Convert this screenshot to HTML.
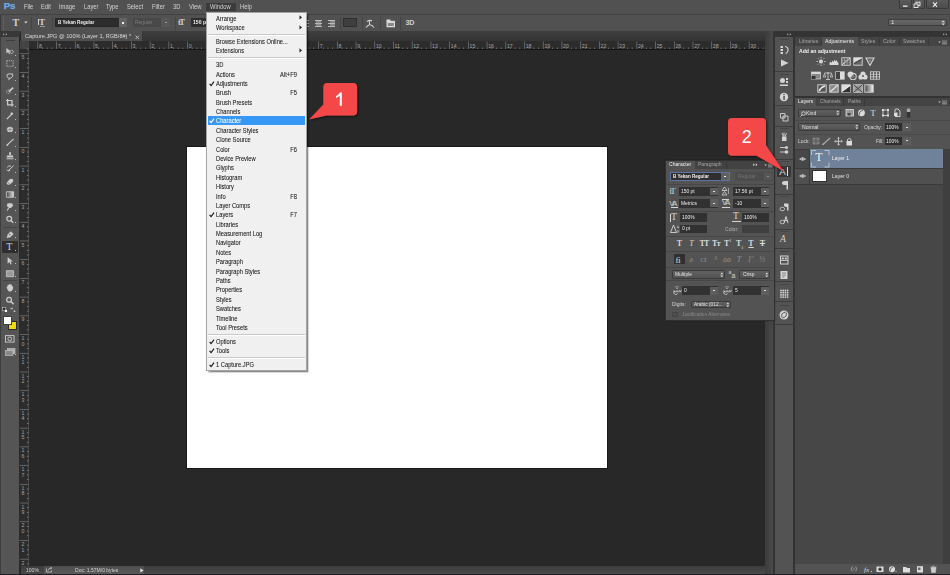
<!DOCTYPE html>
<html><head><meta charset="utf-8">
<style>
*{margin:0;padding:0;box-sizing:border-box}
html,body{width:950px;height:575px;overflow:hidden;background:#282828;font-family:"Liberation Sans",sans-serif;color:#ddd;position:relative}
.a{position:absolute}
.t{position:absolute;white-space:nowrap;line-height:1}
.ns *{vector-effect:non-scaling-stroke}
</style></head><body>
<div class="a" style="left:0px;top:0px;width:950px;height:14px;background:#515151;"></div>
<div class="a" style="left:0px;top:14px;width:950px;height:0.8px;background:#424242;"></div>
<div class="a" style="left:0px;top:14.8px;width:950px;height:0.6px;background:#595959;"></div>
<div class="t" style="left:3.8px;top:1.3px;font-size:9.8px;font-weight:bold;color:#6eaae6;letter-spacing:-0.3px;-webkit-text-stroke:0.25px #6eaae6">Ps</div>
<div class="a" style="left:206px;top:2.5px;width:30px;height:8.5px;background:#3b3b3b;"></div>
<div class="t" style="left:23.6px;top:3.97px;font-size:6.3px;color:#d4d4d4;font-weight:normal;transform:scaleX(0.92);transform-origin:0 0;">File</div>
<div class="t" style="left:40.9px;top:3.97px;font-size:6.3px;color:#d4d4d4;font-weight:normal;transform:scaleX(0.92);transform-origin:0 0;">Edit</div>
<div class="t" style="left:58.9px;top:3.97px;font-size:6.3px;color:#d4d4d4;font-weight:normal;transform:scaleX(0.92);transform-origin:0 0;">Image</div>
<div class="t" style="left:83.8px;top:3.97px;font-size:6.3px;color:#d4d4d4;font-weight:normal;transform:scaleX(0.92);transform-origin:0 0;">Layer</div>
<div class="t" style="left:106px;top:3.97px;font-size:6.3px;color:#d4d4d4;font-weight:normal;transform:scaleX(0.92);transform-origin:0 0;">Type</div>
<div class="t" style="left:127px;top:3.97px;font-size:6.3px;color:#d4d4d4;font-weight:normal;transform:scaleX(0.92);transform-origin:0 0;">Select</div>
<div class="t" style="left:151.6px;top:3.97px;font-size:6.3px;color:#d4d4d4;font-weight:normal;transform:scaleX(0.92);transform-origin:0 0;">Filter</div>
<div class="t" style="left:172.7px;top:3.97px;font-size:6.3px;color:#d4d4d4;font-weight:normal;transform:scaleX(0.92);transform-origin:0 0;">3D</div>
<div class="t" style="left:188.5px;top:3.97px;font-size:6.3px;color:#d4d4d4;font-weight:normal;transform:scaleX(0.92);transform-origin:0 0;">View</div>
<div class="t" style="left:209.7px;top:3.97px;font-size:6.3px;color:#d4d4d4;font-weight:normal;transform:scaleX(0.92);transform-origin:0 0;">Window</div>
<div class="t" style="left:240px;top:3.97px;font-size:6.3px;color:#d4d4d4;font-weight:normal;transform:scaleX(0.92);transform-origin:0 0;">Help</div>
<div class="a" style="left:898.5px;top:-1px;width:13.799999999999955px;height:10px;background:linear-gradient(#5c5c5c,#4c4c4c);border:1px solid #3a3a3a;border-top:none;border-radius:0 0 2px 2px"></div>
<div class="a" style="left:913px;top:-1px;width:12.299999999999955px;height:10px;background:linear-gradient(#5c5c5c,#4c4c4c);border:1px solid #3a3a3a;border-top:none;border-radius:0 0 2px 2px"></div>
<div class="a" style="left:926px;top:-1px;width:22.700000000000045px;height:10px;background:linear-gradient(#5c5c5c,#4c4c4c);border:1px solid #3a3a3a;border-top:none;border-radius:0 0 2px 2px"></div>
<svg class="a" style="left:898px;top:0px;" width="52" height="10" viewBox="0 0 52 10"><rect x="5" y="5.5" width="4.5" height="1.3" fill="#eee"/><rect x="18" y="2.2" width="4" height="3.5" fill="none" stroke="#eee" stroke-width="0.9"/><rect x="16" y="4" width="4" height="3.5" fill="#555" stroke="#eee" stroke-width="0.9"/><path d="M35 2.3 L39 6.8 M39 2.3 L35 6.8" stroke="#eee" stroke-width="1.1"/></svg>
<div class="a" style="left:0px;top:15px;width:950px;height:15.5px;background:#515151;"></div>
<div class="a" style="left:0px;top:30.5px;width:950px;height:0.5px;background:#3c3c3c;"></div>
<div class="a" style="left:0px;top:15px;width:1px;height:16px;background:#3a3a3a;"></div>
<div class="a" style="left:3px;top:17px;width:1px;height:1px;background:#6a6a6a;"></div>
<div class="a" style="left:3px;top:19px;width:1px;height:1px;background:#6a6a6a;"></div>
<div class="a" style="left:3px;top:21px;width:1px;height:1px;background:#6a6a6a;"></div>
<div class="a" style="left:3px;top:23px;width:1px;height:1px;background:#6a6a6a;"></div>
<div class="a" style="left:3px;top:25px;width:1px;height:1px;background:#6a6a6a;"></div>
<div class="a" style="left:3px;top:27px;width:1px;height:1px;background:#6a6a6a;"></div>
<div class="a" style="left:3px;top:29px;width:1px;height:1px;background:#6a6a6a;"></div>
<div class="t" style="left:12.6px;top:17.5px;font-family:'Liberation Serif',serif;font-weight:bold;font-size:10px;color:#cfcfcf">T</div>
<svg class="a" style="left:24px;top:21px;" width="4" height="3" viewBox="0 0 4 3"><path d="M0.2 0.5 L3.6 0.5 L1.9 2.5Z" fill="#ddd"/></svg>
<div class="a" style="left:30.5px;top:16.5px;width:1px;height:13px;background:#444;"></div>
<div class="t" style="left:39px;top:18.3px;font-family:'Liberation Serif',serif;font-weight:bold;font-size:9px;color:#cfcfcf">T</div>
<div class="a" style="left:38px;top:19px;width:0.8px;height:6px;background:#cfcfcf;"></div>
<div class="a" style="left:40px;top:26px;width:5px;height:1px;background:#9a9a9a;"></div>
<div class="a" style="left:51.5px;top:16.5px;width:1px;height:13px;background:#444;"></div>
<div class="a" style="left:55.2px;top:18.2px;width:72.2px;height:8.7px;background:#2d2d2d;border:0.5px solid #262626"></div>
<div class="t" style="left:57.90px;top:20.16px;font-size:5.6px;color:#eeeeee;font-weight:bold;transform:scaleX(0.8231);transform-origin:0 0;">B Yekan Regular</div>
<div class="a" style="left:118.7px;top:18.2px;width:8.7px;height:8.7px;background:#646464;"></div>
<div class="a" style="left:122.2px;top:22px;width:2px;height:1.5px;background:#eee;"></div>
<div class="a" style="left:133px;top:18.2px;width:37px;height:8.7px;background:#484848;"></div>
<div class="t" style="left:135.30px;top:19.99px;font-size:5.8px;color:#7d7d7d;font-weight:normal;transform:scaleX(0.8571);transform-origin:0 0;">Regular</div>
<div class="a" style="left:161.4px;top:18.2px;width:8.6px;height:8.7px;background:#575757;"></div>
<div class="a" style="left:165px;top:22.2px;width:1.6px;height:1px;background:#999;"></div>
<div class="a" style="left:174.5px;top:16.5px;width:1px;height:13px;background:#444;"></div>
<div class="t" style="left:178px;top:18px;font-family:'Liberation Serif',serif;font-weight:bold;font-size:8.5px;color:#cfcfcf;letter-spacing:-1.5px">tT</div>
<div class="a" style="left:191.4px;top:18.2px;width:20px;height:8.7px;background:#2d2d2d;"></div>
<div class="t" style="left:193px;top:20.33px;font-size:5.4px;color:#eee;font-weight:bold;transform:scaleX(0.95);transform-origin:0 0;">150 pt</div>
<svg class="a" style="left:302px;top:19.5px;" width="8" height="8" viewBox="0 0 8 8"><rect x="0" y="0.0" width="7" height="0.9" fill="#c8c8c8"/><rect x="0" y="1.5" width="5" height="0.9" fill="#c8c8c8"/><rect x="0" y="3.0" width="7" height="0.9" fill="#c8c8c8"/><rect x="0" y="4.5" width="5" height="0.9" fill="#c8c8c8"/><rect x="0" y="6.0" width="7" height="0.9" fill="#c8c8c8"/></svg>
<svg class="a" style="left:314.5px;top:19.5px;" width="8" height="8" viewBox="0 0 8 8"><rect x="0.0" y="0.0" width="7" height="0.9" fill="#c8c8c8"/><rect x="1.0" y="1.5" width="5" height="0.9" fill="#c8c8c8"/><rect x="0.0" y="3.0" width="7" height="0.9" fill="#c8c8c8"/><rect x="1.0" y="4.5" width="5" height="0.9" fill="#c8c8c8"/><rect x="0.0" y="6.0" width="7" height="0.9" fill="#c8c8c8"/></svg>
<svg class="a" style="left:327.5px;top:19.5px;" width="8" height="8" viewBox="0 0 8 8"><rect x="0" y="0.0" width="7" height="0.9" fill="#c8c8c8"/><rect x="2" y="1.5" width="5" height="0.9" fill="#c8c8c8"/><rect x="0" y="3.0" width="7" height="0.9" fill="#c8c8c8"/><rect x="2" y="4.5" width="5" height="0.9" fill="#c8c8c8"/><rect x="0" y="6.0" width="7" height="0.9" fill="#c8c8c8"/></svg>
<div class="a" style="left:340.2px;top:16.5px;width:1px;height:13px;background:#444;"></div>
<div class="a" style="left:343px;top:18px;width:13.8px;height:8.9px;background:#3f3f3f;border:0.6px solid #2e2e2e"></div>
<div class="a" style="left:361.8px;top:16.5px;width:1px;height:13px;background:#444;"></div>
<svg class="a" style="left:365px;top:18.5px;" width="10" height="9" viewBox="0 0 10 9"><path d="M2 2.5 Q5 0.5 7 2 M4.5 2 L4.5 5.5 M1 8.5 Q5 3 9 8.5" stroke="#d0d0d0" stroke-width="1.1" fill="none"/></svg>
<div class="a" style="left:380px;top:16.5px;width:1px;height:13px;background:#444;"></div>
<svg class="a" style="left:385.5px;top:18.8px;" width="10" height="9" viewBox="0 0 10 9"><rect x="0.5" y="1.8" width="8.5" height="6.5" fill="#d8d8d8"/><rect x="0.5" y="0.5" width="4" height="2" fill="#d8d8d8"/><rect x="1.8" y="4" width="6" height="3" fill="#888"/></svg>
<div class="a" style="left:400.2px;top:16.5px;width:1px;height:13px;background:#444;"></div>
<div class="t" style="left:405.5px;top:19.2px;font-size:7.2px;font-weight:bold;color:#d0d0d0;letter-spacing:-0.3px">3D</div>
<div class="a" style="left:887.7px;top:18.8px;width:59px;height:7.6px;background:linear-gradient(#686868,#5a5a5a);border:0.6px solid #3e3e3e;border-radius:1px"></div>
<div class="t" style="left:891px;top:20.14px;font-size:5.5px;color:#e0e0e0;font-weight:normal;">1</div>
<svg class="a" style="left:941px;top:19.8px;" width="5" height="6" viewBox="0 0 5 6"><path d="M0.5 2.3 L2.2 0.5 L3.9 2.3Z M0.5 3.5 L2.2 5.3 L3.9 3.5Z" fill="#ddd"/></svg>
<div class="a" style="left:0px;top:31px;width:19px;height:544px;background:#555555;"></div>
<div class="a" style="left:0px;top:31px;width:1.2px;height:544px;background:#3e3e3e;"></div>
<div class="a" style="left:19px;top:41px;width:1px;height:525px;background:#2a2a2a;"></div>
<div class="a" style="left:0px;top:31px;width:19.5px;height:5.8px;background:#383838;"></div>
<svg class="a" style="left:3px;top:32.5px;" width="6" height="3" viewBox="0 0 6 3"><path d="M0.3 0.2 L1.6 1.3 L0.3 2.4Z M2.8 0.2 L4.1 1.3 L2.8 2.4Z" fill="#bbb"/></svg>
<div class="a" style="left:5.5px;top:39.6px;width:9px;height:1px;background:#3d3d3d;"></div>
<svg class="a" style="left:4px;top:46.0px;" width="12" height="11" viewBox="0 0 12 11"><g class="ns" transform="translate(6 5.5) scale(.8) translate(-6 -5.5)"><path d="M1.5 1 L1.5 8 L3.5 6 L5 9 L6 8.5 L4.8 5.6 L7.2 5.6Z" fill="#cdcdcd"/><path d="M8 3.5 L10.5 6 L8 8.5 L5.5 6Z" fill="none" stroke="#cdcdcd" stroke-width="0.8"/></g></svg>
<div class="a" style="left:14.6px;top:54.5px;width:1px;height:1px;background:#bbb;"></div>
<svg class="a" style="left:4px;top:58.3px;" width="12" height="11" viewBox="0 0 12 11"><g class="ns" transform="translate(6 5.5) scale(.8) translate(-6 -5.5)"><rect x="2" y="2" width="8" height="7" fill="none" stroke="#cdcdcd" stroke-width="0.9" stroke-dasharray="1 1.1"/></g></svg>
<div class="a" style="left:14.6px;top:66.8px;width:1px;height:1px;background:#bbb;"></div>
<svg class="a" style="left:4px;top:71.3px;" width="12" height="11" viewBox="0 0 12 11"><g class="ns" transform="translate(6 5.5) scale(.8) translate(-6 -5.5)"><path d="M2 3 Q5 1.5 9.5 2.5 Q10 6 7 7.5 Q4 8.5 2.5 6 Q1.5 4 3 3.5 M5 8 L4.5 10" fill="none" stroke="#cdcdcd" stroke-width="1"/></g></svg>
<div class="a" style="left:14.6px;top:79.8px;width:1px;height:1px;background:#bbb;"></div>
<svg class="a" style="left:4px;top:85.0px;" width="12" height="11" viewBox="0 0 12 11"><g class="ns" transform="translate(6 5.5) scale(.8) translate(-6 -5.5)"><circle cx="4" cy="7" r="2.3" fill="none" stroke="#cdcdcd" stroke-width="0.8" stroke-dasharray="1 0.8"/><path d="M4.5 7 L10 2" stroke="#cdcdcd" stroke-width="1.6"/></g></svg>
<div class="a" style="left:14.6px;top:93.5px;width:1px;height:1px;background:#bbb;"></div>
<svg class="a" style="left:4px;top:97.1px;" width="12" height="11" viewBox="0 0 12 11"><g class="ns" transform="translate(6 5.5) scale(.8) translate(-6 -5.5)"><path d="M3 1 L3 8.5 L10.5 8.5 M1 3 L8.5 3 L8.5 10.5" fill="none" stroke="#cdcdcd" stroke-width="1.2"/></g></svg>
<div class="a" style="left:14.6px;top:105.6px;width:1px;height:1px;background:#bbb;"></div>
<svg class="a" style="left:4px;top:110.0px;" width="12" height="11" viewBox="0 0 12 11"><g class="ns" transform="translate(6 5.5) scale(.8) translate(-6 -5.5)"><path d="M2 10 L7 5" stroke="#cdcdcd" stroke-width="1.2"/><path d="M6 3.5 L8 1.5 Q10 1.5 10 3.5 L8 5.5Z" fill="#cdcdcd"/></g></svg>
<div class="a" style="left:14.6px;top:118.5px;width:1px;height:1px;background:#bbb;"></div>
<svg class="a" style="left:4px;top:123.69999999999999px;" width="12" height="11" viewBox="0 0 12 11"><g class="ns" transform="translate(6 5.5) scale(.8) translate(-6 -5.5)"><ellipse cx="6" cy="5.5" rx="3.8" ry="3.3" fill="#cdcdcd"/><path d="M1 5.5 L11 5.5 M6 1 L6 10" stroke="#777" stroke-width="0.6"/></g></svg>
<div class="a" style="left:14.6px;top:132.2px;width:1px;height:1px;background:#bbb;"></div>
<svg class="a" style="left:4px;top:137.3px;" width="12" height="11" viewBox="0 0 12 11"><g class="ns" transform="translate(6 5.5) scale(.8) translate(-6 -5.5)"><path d="M3.5 7.5 L10.5 1" stroke="#cdcdcd" stroke-width="1.1"/><path d="M1.5 10 Q1.5 7 3.8 7.2 Q5 8.5 3 9.8Z" fill="#cdcdcd"/></g></svg>
<div class="a" style="left:14.6px;top:145.8px;width:1px;height:1px;background:#bbb;"></div>
<svg class="a" style="left:4px;top:150.3px;" width="12" height="11" viewBox="0 0 12 11"><g class="ns" transform="translate(6 5.5) scale(.8) translate(-6 -5.5)"><rect x="5" y="1" width="2.2" height="4.5" rx="1" fill="#cdcdcd"/><rect x="2" y="5.5" width="8" height="2.5" fill="#cdcdcd"/><rect x="1.5" y="9" width="9" height="1.2" fill="#cdcdcd"/></g></svg>
<div class="a" style="left:14.6px;top:158.8px;width:1px;height:1px;background:#bbb;"></div>
<svg class="a" style="left:4px;top:163.3px;" width="12" height="11" viewBox="0 0 12 11"><g class="ns" transform="translate(6 5.5) scale(.8) translate(-6 -5.5)"><path d="M2.5 4 Q4 1.5 7 2.5 M2 7 Q3 9.5 6 8 M4 8 L10.5 2" fill="none" stroke="#cdcdcd" stroke-width="1"/></g></svg>
<div class="a" style="left:14.6px;top:171.8px;width:1px;height:1px;background:#bbb;"></div>
<svg class="a" style="left:4px;top:176.1px;" width="12" height="11" viewBox="0 0 12 11"><g class="ns" transform="translate(6 5.5) scale(.8) translate(-6 -5.5)"><path d="M1.5 7 L6 2.5 Q7.5 1.5 9 2.5 L10 3.5 Q10.5 5 9.5 6 L5.5 9.5 L3 9.5Z" fill="#cdcdcd"/><path d="M2.5 6 L6 9.3" stroke="#666" stroke-width="0.7"/></g></svg>
<div class="a" style="left:14.6px;top:184.6px;width:1px;height:1px;background:#bbb;"></div>
<svg class="a" style="left:4px;top:188.5px;" width="12" height="11" viewBox="0 0 12 11"><g class="ns" transform="translate(6 5.5) scale(.8) translate(-6 -5.5)"><rect x="1.5" y="2" width="9" height="7" fill="url(#gr)" stroke="#cdcdcd" stroke-width="0.8"/><defs><linearGradient id="gr"><stop offset="0" stop-color="#444"/><stop offset="1" stop-color="#ddd"/></linearGradient></defs></g></svg>
<div class="a" style="left:14.6px;top:197px;width:1px;height:1px;background:#bbb;"></div>
<svg class="a" style="left:4px;top:201.1px;" width="12" height="11" viewBox="0 0 12 11"><g class="ns" transform="translate(6 5.5) scale(.8) translate(-6 -5.5)"><path d="M3 1.5 L8.5 1.5 L10 4.5 L7 7.5 L5 7.5 L2 5Z" fill="#cdcdcd"/><path d="M4.5 7 L2.5 10.5" stroke="#cdcdcd" stroke-width="1.1"/></g></svg>
<div class="a" style="left:14.6px;top:209.6px;width:1px;height:1px;background:#bbb;"></div>
<svg class="a" style="left:4px;top:213.5px;" width="12" height="11" viewBox="0 0 12 11"><g class="ns" transform="translate(6 5.5) scale(.8) translate(-6 -5.5)"><circle cx="5" cy="4.5" r="3" fill="none" stroke="#cdcdcd" stroke-width="1.2"/><path d="M7 6.5 L10 9.5" stroke="#cdcdcd" stroke-width="1.3"/></g></svg>
<div class="a" style="left:14.6px;top:222px;width:1px;height:1px;background:#bbb;"></div>
<div class="a" style="left:3px;top:227.3px;width:14px;height:0.8px;background:#444;"></div>
<svg class="a" style="left:4px;top:228.6px;" width="12" height="11" viewBox="0 0 12 11"><g class="ns" transform="translate(6 5.5) scale(.8) translate(-6 -5.5)"><path d="M2 10 L3 5.5 L7 1.5 L10.5 5 L6.5 9Z" fill="#cdcdcd"/><circle cx="5.8" cy="5.8" r="0.9" fill="#555"/></g></svg>
<div class="a" style="left:14.6px;top:237.1px;width:1px;height:1px;background:#bbb;"></div>
<div class="a" style="left:2.3px;top:241.3px;width:15.3px;height:11.7px;background:#2e2e2e;border-radius:1px"></div>
<div class="t" style="left:6.2px;top:242.4px;font-family:'Liberation Serif',serif;font-size:10px;color:#d0d0d0">T</div>
<div class="a" style="left:14.6px;top:250px;width:1px;height:1px;background:#bbb;"></div>
<svg class="a" style="left:4px;top:254.7px;" width="12" height="11" viewBox="0 0 12 11"><g class="ns" transform="translate(6 5.5) scale(.8) translate(-6 -5.5)"><path d="M3 1 L3 9.5 L5.2 7.4 L6.6 10.5 L8 9.9 L6.7 6.9 L9.5 6.9Z" fill="#cdcdcd"/></g></svg>
<div class="a" style="left:14.6px;top:263.2px;width:1px;height:1px;background:#bbb;"></div>
<svg class="a" style="left:4px;top:267.7px;" width="12" height="11" viewBox="0 0 12 11"><g class="ns" transform="translate(6 5.5) scale(.8) translate(-6 -5.5)"><rect x="1.5" y="2" width="9" height="7.5" fill="#9a9a9a" stroke="#cdcdcd" stroke-width="0.8"/></g></svg>
<div class="a" style="left:14.6px;top:276.2px;width:1px;height:1px;background:#bbb;"></div>
<div class="a" style="left:3px;top:279.6px;width:14px;height:0.8px;background:#444;"></div>
<svg class="a" style="left:4px;top:282.1px;" width="12" height="11" viewBox="0 0 12 11"><g class="ns" transform="translate(6 5.5) scale(.8) translate(-6 -5.5)"><path d="M2 6 Q1.5 4 3 4.5 L3 2.5 Q4 1.5 4.8 2.5 L4.8 1.5 Q5.8 0.5 6.6 1.5 L6.6 2 Q7.6 1.2 8.4 2.2 L8.4 4 Q9.5 3.5 10 4.5 L9.5 8 Q8.5 10.5 6 10.5 Q3.5 10.5 2 6Z" fill="#cdcdcd"/></g></svg>
<div class="a" style="left:14.6px;top:290.6px;width:1px;height:1px;background:#bbb;"></div>
<svg class="a" style="left:4px;top:294.9px;" width="12" height="11" viewBox="0 0 12 11"><g class="ns" transform="translate(6 5.5) scale(.8) translate(-6 -5.5)"><circle cx="4.8" cy="4.5" r="3" fill="none" stroke="#cdcdcd" stroke-width="1.2"/><path d="M7 6.8 L10.5 10" stroke="#cdcdcd" stroke-width="1.5"/></g></svg>
<svg class="a" style="left:2px;top:307px;" width="6" height="6" viewBox="0 0 6 6"><rect x="0.5" y="0.5" width="3" height="3" fill="#222" stroke="#ccc" stroke-width="0.6"/><rect x="2.3" y="2.3" width="3" height="3" fill="#fff" stroke="#222" stroke-width="0.5"/></svg>
<svg class="a" style="left:10px;top:307px;" width="7" height="6" viewBox="0 0 7 6"><path d="M1 1.5 L3 1.5 M4.5 3 L4.5 5 M1 1.5 L2 0.5 M1 1.5 L2 2.5 M4.5 5 L3.5 4 M4.5 5 L5.5 4" stroke="#ccc" stroke-width="0.7" fill="none"/></svg>
<div class="a" style="left:7.8px;top:321px;width:9.2px;height:9.2px;background:#f2d900;border:0.6px solid #2b2b2b"></div>
<div class="a" style="left:2.6px;top:316px;width:9.8px;height:9.2px;background:#ffffff;border:0.6px solid #444"></div>
<svg class="a" style="left:5px;top:334.5px;" width="10" height="8" viewBox="0 0 10 8"><rect x="0.5" y="0.6" width="8.5" height="6.5" fill="none" stroke="#ccc" stroke-width="0.9"/><circle cx="4.75" cy="3.85" r="1.9" fill="none" stroke="#ccc" stroke-width="0.9"/></svg>
<svg class="a" style="left:5px;top:347.5px;" width="11" height="8" viewBox="0 0 11 8"><rect x="2.5" y="0.5" width="7.5" height="5" fill="#aaa" stroke="#ccc" stroke-width="0.6"/><rect x="0.5" y="2.5" width="7.5" height="5" fill="#888" stroke="#ccc" stroke-width="0.6"/></svg>
<div class="a" style="left:14.6px;top:354px;width:1px;height:1px;background:#bbb;"></div>
<div class="a" style="left:20.5px;top:31px;width:744.5px;height:10px;background:linear-gradient(#3e3e3e,#343434);"></div>
<div class="a" style="left:21.2px;top:31.4px;width:120.4px;height:9.6px;background:#505050;"></div>
<div class="t" style="left:25.3px;top:33.45px;font-size:6.2px;color:#dadada;font-weight:normal;transform:scaleX(0.905);transform-origin:0 0;">Capture.JPG @ 100% (Layer 1, RGB/8#) *</div>
<svg class="a" style="left:134.8px;top:34.5px;" width="5" height="5" viewBox="0 0 5 5"><path d="M0.6 0.6 L4 4 M4 0.6 L0.6 4" stroke="#cfcfcf" stroke-width="0.8"/></svg>
<div class="a" style="left:20.5px;top:41px;width:744.5px;height:8px;background:#2c2c2c;"></div>
<div class="a" style="left:19.5px;top:41px;width:9.2px;height:525.2px;background:#2c2c2c;"></div>
<div class="a" style="left:19.5px;top:41px;width:9.2px;height:8px;background:#444444;"></div>
<div class="a" style="left:28.7px;top:49px;width:736.3px;height:1px;background:#161616;"></div>
<div class="a" style="left:28.3px;top:49px;width:0.7px;height:517px;background:#4a4a4a;"></div>
<svg class="a" style="left:0;top:0" width="950" height="575" viewBox="0 0 950 575"><rect x="37.44" y="41.5" width="0.7" height="7.5" fill="#7a7a7a"/><text x="38.94" y="48" font-size="5.2" fill="#a5a5a5" font-family="Liberation Sans">8</text><rect x="42.12" y="47.6" width="0.7" height="1.2" fill="#9a9a9a"/><rect x="46.80" y="47.6" width="0.7" height="1.2" fill="#9a9a9a"/><rect x="51.48" y="47.6" width="0.7" height="1.2" fill="#9a9a9a"/><rect x="56.16" y="41.5" width="0.7" height="7.5" fill="#7a7a7a"/><text x="57.66" y="48" font-size="5.2" fill="#a5a5a5" font-family="Liberation Sans">7</text><rect x="60.84" y="47.6" width="0.7" height="1.2" fill="#9a9a9a"/><rect x="65.52" y="47.6" width="0.7" height="1.2" fill="#9a9a9a"/><rect x="70.20" y="47.6" width="0.7" height="1.2" fill="#9a9a9a"/><rect x="74.88" y="41.5" width="0.7" height="7.5" fill="#7a7a7a"/><text x="76.38" y="48" font-size="5.2" fill="#a5a5a5" font-family="Liberation Sans">6</text><rect x="79.56" y="47.6" width="0.7" height="1.2" fill="#9a9a9a"/><rect x="84.24" y="47.6" width="0.7" height="1.2" fill="#9a9a9a"/><rect x="88.92" y="47.6" width="0.7" height="1.2" fill="#9a9a9a"/><rect x="93.60" y="41.5" width="0.7" height="7.5" fill="#7a7a7a"/><text x="95.10" y="48" font-size="5.2" fill="#a5a5a5" font-family="Liberation Sans">5</text><rect x="98.28" y="47.6" width="0.7" height="1.2" fill="#9a9a9a"/><rect x="102.96" y="47.6" width="0.7" height="1.2" fill="#9a9a9a"/><rect x="107.64" y="47.6" width="0.7" height="1.2" fill="#9a9a9a"/><rect x="112.32" y="41.5" width="0.7" height="7.5" fill="#7a7a7a"/><text x="113.82" y="48" font-size="5.2" fill="#a5a5a5" font-family="Liberation Sans">4</text><rect x="117.00" y="47.6" width="0.7" height="1.2" fill="#9a9a9a"/><rect x="121.68" y="47.6" width="0.7" height="1.2" fill="#9a9a9a"/><rect x="126.36" y="47.6" width="0.7" height="1.2" fill="#9a9a9a"/><rect x="131.04" y="41.5" width="0.7" height="7.5" fill="#7a7a7a"/><text x="132.54" y="48" font-size="5.2" fill="#a5a5a5" font-family="Liberation Sans">3</text><rect x="135.72" y="47.6" width="0.7" height="1.2" fill="#9a9a9a"/><rect x="140.40" y="47.6" width="0.7" height="1.2" fill="#9a9a9a"/><rect x="145.08" y="47.6" width="0.7" height="1.2" fill="#9a9a9a"/><rect x="149.76" y="41.5" width="0.7" height="7.5" fill="#7a7a7a"/><text x="151.26" y="48" font-size="5.2" fill="#a5a5a5" font-family="Liberation Sans">2</text><rect x="154.44" y="47.6" width="0.7" height="1.2" fill="#9a9a9a"/><rect x="159.12" y="47.6" width="0.7" height="1.2" fill="#9a9a9a"/><rect x="163.80" y="47.6" width="0.7" height="1.2" fill="#9a9a9a"/><rect x="168.48" y="41.5" width="0.7" height="7.5" fill="#7a7a7a"/><text x="169.98" y="48" font-size="5.2" fill="#a5a5a5" font-family="Liberation Sans">1</text><rect x="173.16" y="47.6" width="0.7" height="1.2" fill="#9a9a9a"/><rect x="177.84" y="47.6" width="0.7" height="1.2" fill="#9a9a9a"/><rect x="182.52" y="47.6" width="0.7" height="1.2" fill="#9a9a9a"/><rect x="187.20" y="41.5" width="0.7" height="7.5" fill="#7a7a7a"/><text x="188.70" y="48" font-size="5.2" fill="#a5a5a5" font-family="Liberation Sans">0</text><rect x="191.88" y="47.6" width="0.7" height="1.2" fill="#9a9a9a"/><rect x="196.56" y="47.6" width="0.7" height="1.2" fill="#9a9a9a"/><rect x="201.24" y="47.6" width="0.7" height="1.2" fill="#9a9a9a"/><rect x="205.92" y="41.5" width="0.7" height="7.5" fill="#7a7a7a"/><text x="207.42" y="48" font-size="5.2" fill="#a5a5a5" font-family="Liberation Sans">1</text><rect x="210.60" y="47.6" width="0.7" height="1.2" fill="#9a9a9a"/><rect x="215.28" y="47.6" width="0.7" height="1.2" fill="#9a9a9a"/><rect x="219.96" y="47.6" width="0.7" height="1.2" fill="#9a9a9a"/><rect x="224.64" y="41.5" width="0.7" height="7.5" fill="#7a7a7a"/><text x="226.14" y="48" font-size="5.2" fill="#a5a5a5" font-family="Liberation Sans">2</text><rect x="229.32" y="47.6" width="0.7" height="1.2" fill="#9a9a9a"/><rect x="234.00" y="47.6" width="0.7" height="1.2" fill="#9a9a9a"/><rect x="238.68" y="47.6" width="0.7" height="1.2" fill="#9a9a9a"/><rect x="243.36" y="41.5" width="0.7" height="7.5" fill="#7a7a7a"/><text x="244.86" y="48" font-size="5.2" fill="#a5a5a5" font-family="Liberation Sans">3</text><rect x="248.04" y="47.6" width="0.7" height="1.2" fill="#9a9a9a"/><rect x="252.72" y="47.6" width="0.7" height="1.2" fill="#9a9a9a"/><rect x="257.40" y="47.6" width="0.7" height="1.2" fill="#9a9a9a"/><rect x="262.08" y="41.5" width="0.7" height="7.5" fill="#7a7a7a"/><text x="263.58" y="48" font-size="5.2" fill="#a5a5a5" font-family="Liberation Sans">4</text><rect x="266.76" y="47.6" width="0.7" height="1.2" fill="#9a9a9a"/><rect x="271.44" y="47.6" width="0.7" height="1.2" fill="#9a9a9a"/><rect x="276.12" y="47.6" width="0.7" height="1.2" fill="#9a9a9a"/><rect x="280.80" y="41.5" width="0.7" height="7.5" fill="#7a7a7a"/><text x="282.30" y="48" font-size="5.2" fill="#a5a5a5" font-family="Liberation Sans">5</text><rect x="285.48" y="47.6" width="0.7" height="1.2" fill="#9a9a9a"/><rect x="290.16" y="47.6" width="0.7" height="1.2" fill="#9a9a9a"/><rect x="294.84" y="47.6" width="0.7" height="1.2" fill="#9a9a9a"/><rect x="299.52" y="41.5" width="0.7" height="7.5" fill="#7a7a7a"/><text x="301.02" y="48" font-size="5.2" fill="#a5a5a5" font-family="Liberation Sans">6</text><rect x="304.20" y="47.6" width="0.7" height="1.2" fill="#9a9a9a"/><rect x="308.88" y="47.6" width="0.7" height="1.2" fill="#9a9a9a"/><rect x="313.56" y="47.6" width="0.7" height="1.2" fill="#9a9a9a"/><rect x="318.24" y="41.5" width="0.7" height="7.5" fill="#7a7a7a"/><text x="319.74" y="48" font-size="5.2" fill="#a5a5a5" font-family="Liberation Sans">7</text><rect x="322.92" y="47.6" width="0.7" height="1.2" fill="#9a9a9a"/><rect x="327.60" y="47.6" width="0.7" height="1.2" fill="#9a9a9a"/><rect x="332.28" y="47.6" width="0.7" height="1.2" fill="#9a9a9a"/><rect x="336.96" y="41.5" width="0.7" height="7.5" fill="#7a7a7a"/><text x="338.46" y="48" font-size="5.2" fill="#a5a5a5" font-family="Liberation Sans">8</text><rect x="341.64" y="47.6" width="0.7" height="1.2" fill="#9a9a9a"/><rect x="346.32" y="47.6" width="0.7" height="1.2" fill="#9a9a9a"/><rect x="351.00" y="47.6" width="0.7" height="1.2" fill="#9a9a9a"/><rect x="355.68" y="41.5" width="0.7" height="7.5" fill="#7a7a7a"/><text x="357.18" y="48" font-size="5.2" fill="#a5a5a5" font-family="Liberation Sans">9</text><rect x="360.36" y="47.6" width="0.7" height="1.2" fill="#9a9a9a"/><rect x="365.04" y="47.6" width="0.7" height="1.2" fill="#9a9a9a"/><rect x="369.72" y="47.6" width="0.7" height="1.2" fill="#9a9a9a"/><rect x="374.40" y="41.5" width="0.7" height="7.5" fill="#7a7a7a"/><text x="375.90" y="48" font-size="5.2" fill="#a5a5a5" font-family="Liberation Sans">10</text><rect x="379.08" y="47.6" width="0.7" height="1.2" fill="#9a9a9a"/><rect x="383.76" y="47.6" width="0.7" height="1.2" fill="#9a9a9a"/><rect x="388.44" y="47.6" width="0.7" height="1.2" fill="#9a9a9a"/><rect x="393.12" y="41.5" width="0.7" height="7.5" fill="#7a7a7a"/><text x="394.62" y="48" font-size="5.2" fill="#a5a5a5" font-family="Liberation Sans">11</text><rect x="397.80" y="47.6" width="0.7" height="1.2" fill="#9a9a9a"/><rect x="402.48" y="47.6" width="0.7" height="1.2" fill="#9a9a9a"/><rect x="407.16" y="47.6" width="0.7" height="1.2" fill="#9a9a9a"/><rect x="411.84" y="41.5" width="0.7" height="7.5" fill="#7a7a7a"/><text x="413.34" y="48" font-size="5.2" fill="#a5a5a5" font-family="Liberation Sans">12</text><rect x="416.52" y="47.6" width="0.7" height="1.2" fill="#9a9a9a"/><rect x="421.20" y="47.6" width="0.7" height="1.2" fill="#9a9a9a"/><rect x="425.88" y="47.6" width="0.7" height="1.2" fill="#9a9a9a"/><rect x="430.56" y="41.5" width="0.7" height="7.5" fill="#7a7a7a"/><text x="432.06" y="48" font-size="5.2" fill="#a5a5a5" font-family="Liberation Sans">13</text><rect x="435.24" y="47.6" width="0.7" height="1.2" fill="#9a9a9a"/><rect x="439.92" y="47.6" width="0.7" height="1.2" fill="#9a9a9a"/><rect x="444.60" y="47.6" width="0.7" height="1.2" fill="#9a9a9a"/><rect x="449.28" y="41.5" width="0.7" height="7.5" fill="#7a7a7a"/><text x="450.78" y="48" font-size="5.2" fill="#a5a5a5" font-family="Liberation Sans">14</text><rect x="453.96" y="47.6" width="0.7" height="1.2" fill="#9a9a9a"/><rect x="458.64" y="47.6" width="0.7" height="1.2" fill="#9a9a9a"/><rect x="463.32" y="47.6" width="0.7" height="1.2" fill="#9a9a9a"/><rect x="468.00" y="41.5" width="0.7" height="7.5" fill="#7a7a7a"/><text x="469.50" y="48" font-size="5.2" fill="#a5a5a5" font-family="Liberation Sans">15</text><rect x="472.68" y="47.6" width="0.7" height="1.2" fill="#9a9a9a"/><rect x="477.36" y="47.6" width="0.7" height="1.2" fill="#9a9a9a"/><rect x="482.04" y="47.6" width="0.7" height="1.2" fill="#9a9a9a"/><rect x="486.72" y="41.5" width="0.7" height="7.5" fill="#7a7a7a"/><text x="488.22" y="48" font-size="5.2" fill="#a5a5a5" font-family="Liberation Sans">16</text><rect x="491.40" y="47.6" width="0.7" height="1.2" fill="#9a9a9a"/><rect x="496.08" y="47.6" width="0.7" height="1.2" fill="#9a9a9a"/><rect x="500.76" y="47.6" width="0.7" height="1.2" fill="#9a9a9a"/><rect x="505.44" y="41.5" width="0.7" height="7.5" fill="#7a7a7a"/><text x="506.94" y="48" font-size="5.2" fill="#a5a5a5" font-family="Liberation Sans">17</text><rect x="510.12" y="47.6" width="0.7" height="1.2" fill="#9a9a9a"/><rect x="514.80" y="47.6" width="0.7" height="1.2" fill="#9a9a9a"/><rect x="519.48" y="47.6" width="0.7" height="1.2" fill="#9a9a9a"/><rect x="524.16" y="41.5" width="0.7" height="7.5" fill="#7a7a7a"/><text x="525.66" y="48" font-size="5.2" fill="#a5a5a5" font-family="Liberation Sans">18</text><rect x="528.84" y="47.6" width="0.7" height="1.2" fill="#9a9a9a"/><rect x="533.52" y="47.6" width="0.7" height="1.2" fill="#9a9a9a"/><rect x="538.20" y="47.6" width="0.7" height="1.2" fill="#9a9a9a"/><rect x="542.88" y="41.5" width="0.7" height="7.5" fill="#7a7a7a"/><text x="544.38" y="48" font-size="5.2" fill="#a5a5a5" font-family="Liberation Sans">19</text><rect x="547.56" y="47.6" width="0.7" height="1.2" fill="#9a9a9a"/><rect x="552.24" y="47.6" width="0.7" height="1.2" fill="#9a9a9a"/><rect x="556.92" y="47.6" width="0.7" height="1.2" fill="#9a9a9a"/><rect x="561.60" y="41.5" width="0.7" height="7.5" fill="#7a7a7a"/><text x="563.10" y="48" font-size="5.2" fill="#a5a5a5" font-family="Liberation Sans">20</text><rect x="566.28" y="47.6" width="0.7" height="1.2" fill="#9a9a9a"/><rect x="570.96" y="47.6" width="0.7" height="1.2" fill="#9a9a9a"/><rect x="575.64" y="47.6" width="0.7" height="1.2" fill="#9a9a9a"/><rect x="580.32" y="41.5" width="0.7" height="7.5" fill="#7a7a7a"/><text x="581.82" y="48" font-size="5.2" fill="#a5a5a5" font-family="Liberation Sans">21</text><rect x="585.00" y="47.6" width="0.7" height="1.2" fill="#9a9a9a"/><rect x="589.68" y="47.6" width="0.7" height="1.2" fill="#9a9a9a"/><rect x="594.36" y="47.6" width="0.7" height="1.2" fill="#9a9a9a"/><rect x="599.04" y="41.5" width="0.7" height="7.5" fill="#7a7a7a"/><text x="600.54" y="48" font-size="5.2" fill="#a5a5a5" font-family="Liberation Sans">22</text><rect x="603.72" y="47.6" width="0.7" height="1.2" fill="#9a9a9a"/><rect x="608.40" y="47.6" width="0.7" height="1.2" fill="#9a9a9a"/><rect x="613.08" y="47.6" width="0.7" height="1.2" fill="#9a9a9a"/><rect x="617.76" y="41.5" width="0.7" height="7.5" fill="#7a7a7a"/><text x="619.26" y="48" font-size="5.2" fill="#a5a5a5" font-family="Liberation Sans">23</text><rect x="622.44" y="47.6" width="0.7" height="1.2" fill="#9a9a9a"/><rect x="627.12" y="47.6" width="0.7" height="1.2" fill="#9a9a9a"/><rect x="631.80" y="47.6" width="0.7" height="1.2" fill="#9a9a9a"/><rect x="636.48" y="41.5" width="0.7" height="7.5" fill="#7a7a7a"/><text x="637.98" y="48" font-size="5.2" fill="#a5a5a5" font-family="Liberation Sans">24</text><rect x="641.16" y="47.6" width="0.7" height="1.2" fill="#9a9a9a"/><rect x="645.84" y="47.6" width="0.7" height="1.2" fill="#9a9a9a"/><rect x="650.52" y="47.6" width="0.7" height="1.2" fill="#9a9a9a"/><rect x="655.20" y="41.5" width="0.7" height="7.5" fill="#7a7a7a"/><text x="656.70" y="48" font-size="5.2" fill="#a5a5a5" font-family="Liberation Sans">25</text><rect x="659.88" y="47.6" width="0.7" height="1.2" fill="#9a9a9a"/><rect x="664.56" y="47.6" width="0.7" height="1.2" fill="#9a9a9a"/><rect x="669.24" y="47.6" width="0.7" height="1.2" fill="#9a9a9a"/><rect x="673.92" y="41.5" width="0.7" height="7.5" fill="#7a7a7a"/><text x="675.42" y="48" font-size="5.2" fill="#a5a5a5" font-family="Liberation Sans">26</text><rect x="678.60" y="47.6" width="0.7" height="1.2" fill="#9a9a9a"/><rect x="683.28" y="47.6" width="0.7" height="1.2" fill="#9a9a9a"/><rect x="687.96" y="47.6" width="0.7" height="1.2" fill="#9a9a9a"/><rect x="692.64" y="41.5" width="0.7" height="7.5" fill="#7a7a7a"/><text x="694.14" y="48" font-size="5.2" fill="#a5a5a5" font-family="Liberation Sans">27</text><rect x="697.32" y="47.6" width="0.7" height="1.2" fill="#9a9a9a"/><rect x="702.00" y="47.6" width="0.7" height="1.2" fill="#9a9a9a"/><rect x="706.68" y="47.6" width="0.7" height="1.2" fill="#9a9a9a"/><rect x="711.36" y="41.5" width="0.7" height="7.5" fill="#7a7a7a"/><text x="712.86" y="48" font-size="5.2" fill="#a5a5a5" font-family="Liberation Sans">28</text><rect x="716.04" y="47.6" width="0.7" height="1.2" fill="#9a9a9a"/><rect x="720.72" y="47.6" width="0.7" height="1.2" fill="#9a9a9a"/><rect x="725.40" y="47.6" width="0.7" height="1.2" fill="#9a9a9a"/><rect x="730.08" y="41.5" width="0.7" height="7.5" fill="#7a7a7a"/><text x="731.58" y="48" font-size="5.2" fill="#a5a5a5" font-family="Liberation Sans">29</text><rect x="734.76" y="47.6" width="0.7" height="1.2" fill="#9a9a9a"/><rect x="739.44" y="47.6" width="0.7" height="1.2" fill="#9a9a9a"/><rect x="744.12" y="47.6" width="0.7" height="1.2" fill="#9a9a9a"/><rect x="748.80" y="41.5" width="0.7" height="7.5" fill="#7a7a7a"/><text x="750.30" y="48" font-size="5.2" fill="#a5a5a5" font-family="Liberation Sans">30</text><rect x="753.48" y="47.6" width="0.7" height="1.2" fill="#9a9a9a"/><rect x="758.16" y="47.6" width="0.7" height="1.2" fill="#9a9a9a"/><rect x="762.84" y="47.6" width="0.7" height="1.2" fill="#9a9a9a"/><rect x="27" y="48.72" width="1.4" height="0.7" fill="#9a9a9a"/><rect x="19.8" y="53.40" width="8.7" height="0.7" fill="#7a7a7a"/><text x="21.6" y="59.30" font-size="5.2" fill="#a5a5a5" font-family="Liberation Sans">5</text><rect x="27" y="58.08" width="1.4" height="0.7" fill="#9a9a9a"/><rect x="27" y="62.76" width="1.4" height="0.7" fill="#9a9a9a"/><rect x="27" y="67.44" width="1.4" height="0.7" fill="#9a9a9a"/><rect x="19.8" y="72.12" width="8.7" height="0.7" fill="#7a7a7a"/><text x="21.6" y="78.02" font-size="5.2" fill="#a5a5a5" font-family="Liberation Sans">4</text><rect x="27" y="76.80" width="1.4" height="0.7" fill="#9a9a9a"/><rect x="27" y="81.48" width="1.4" height="0.7" fill="#9a9a9a"/><rect x="27" y="86.16" width="1.4" height="0.7" fill="#9a9a9a"/><rect x="19.8" y="90.84" width="8.7" height="0.7" fill="#7a7a7a"/><text x="21.6" y="96.74" font-size="5.2" fill="#a5a5a5" font-family="Liberation Sans">3</text><rect x="27" y="95.52" width="1.4" height="0.7" fill="#9a9a9a"/><rect x="27" y="100.20" width="1.4" height="0.7" fill="#9a9a9a"/><rect x="27" y="104.88" width="1.4" height="0.7" fill="#9a9a9a"/><rect x="19.8" y="109.56" width="8.7" height="0.7" fill="#7a7a7a"/><text x="21.6" y="115.46" font-size="5.2" fill="#a5a5a5" font-family="Liberation Sans">2</text><rect x="27" y="114.24" width="1.4" height="0.7" fill="#9a9a9a"/><rect x="27" y="118.92" width="1.4" height="0.7" fill="#9a9a9a"/><rect x="27" y="123.60" width="1.4" height="0.7" fill="#9a9a9a"/><rect x="19.8" y="128.28" width="8.7" height="0.7" fill="#7a7a7a"/><text x="21.6" y="134.18" font-size="5.2" fill="#a5a5a5" font-family="Liberation Sans">1</text><rect x="27" y="132.96" width="1.4" height="0.7" fill="#9a9a9a"/><rect x="27" y="137.64" width="1.4" height="0.7" fill="#9a9a9a"/><rect x="27" y="142.32" width="1.4" height="0.7" fill="#9a9a9a"/><rect x="19.8" y="147.00" width="8.7" height="0.7" fill="#7a7a7a"/><text x="21.6" y="152.90" font-size="5.2" fill="#a5a5a5" font-family="Liberation Sans">0</text><rect x="27" y="151.68" width="1.4" height="0.7" fill="#9a9a9a"/><rect x="27" y="156.36" width="1.4" height="0.7" fill="#9a9a9a"/><rect x="27" y="161.04" width="1.4" height="0.7" fill="#9a9a9a"/><rect x="19.8" y="165.72" width="8.7" height="0.7" fill="#7a7a7a"/><text x="21.6" y="171.62" font-size="5.2" fill="#a5a5a5" font-family="Liberation Sans">1</text><rect x="27" y="170.40" width="1.4" height="0.7" fill="#9a9a9a"/><rect x="27" y="175.08" width="1.4" height="0.7" fill="#9a9a9a"/><rect x="27" y="179.76" width="1.4" height="0.7" fill="#9a9a9a"/><rect x="19.8" y="184.44" width="8.7" height="0.7" fill="#7a7a7a"/><text x="21.6" y="190.34" font-size="5.2" fill="#a5a5a5" font-family="Liberation Sans">2</text><rect x="27" y="189.12" width="1.4" height="0.7" fill="#9a9a9a"/><rect x="27" y="193.80" width="1.4" height="0.7" fill="#9a9a9a"/><rect x="27" y="198.48" width="1.4" height="0.7" fill="#9a9a9a"/><rect x="19.8" y="203.16" width="8.7" height="0.7" fill="#7a7a7a"/><text x="21.6" y="209.06" font-size="5.2" fill="#a5a5a5" font-family="Liberation Sans">3</text><rect x="27" y="207.84" width="1.4" height="0.7" fill="#9a9a9a"/><rect x="27" y="212.52" width="1.4" height="0.7" fill="#9a9a9a"/><rect x="27" y="217.20" width="1.4" height="0.7" fill="#9a9a9a"/><rect x="19.8" y="221.88" width="8.7" height="0.7" fill="#7a7a7a"/><text x="21.6" y="227.78" font-size="5.2" fill="#a5a5a5" font-family="Liberation Sans">4</text><rect x="27" y="226.56" width="1.4" height="0.7" fill="#9a9a9a"/><rect x="27" y="231.24" width="1.4" height="0.7" fill="#9a9a9a"/><rect x="27" y="235.92" width="1.4" height="0.7" fill="#9a9a9a"/><rect x="19.8" y="240.60" width="8.7" height="0.7" fill="#7a7a7a"/><text x="21.6" y="246.50" font-size="5.2" fill="#a5a5a5" font-family="Liberation Sans">5</text><rect x="27" y="245.28" width="1.4" height="0.7" fill="#9a9a9a"/><rect x="27" y="249.96" width="1.4" height="0.7" fill="#9a9a9a"/><rect x="27" y="254.64" width="1.4" height="0.7" fill="#9a9a9a"/><rect x="19.8" y="259.32" width="8.7" height="0.7" fill="#7a7a7a"/><text x="21.6" y="265.22" font-size="5.2" fill="#a5a5a5" font-family="Liberation Sans">6</text><rect x="27" y="264.00" width="1.4" height="0.7" fill="#9a9a9a"/><rect x="27" y="268.68" width="1.4" height="0.7" fill="#9a9a9a"/><rect x="27" y="273.36" width="1.4" height="0.7" fill="#9a9a9a"/><rect x="19.8" y="278.04" width="8.7" height="0.7" fill="#7a7a7a"/><text x="21.6" y="283.94" font-size="5.2" fill="#a5a5a5" font-family="Liberation Sans">7</text><rect x="27" y="282.72" width="1.4" height="0.7" fill="#9a9a9a"/><rect x="27" y="287.40" width="1.4" height="0.7" fill="#9a9a9a"/><rect x="27" y="292.08" width="1.4" height="0.7" fill="#9a9a9a"/><rect x="19.8" y="296.76" width="8.7" height="0.7" fill="#7a7a7a"/><text x="21.6" y="302.66" font-size="5.2" fill="#a5a5a5" font-family="Liberation Sans">8</text><rect x="27" y="301.44" width="1.4" height="0.7" fill="#9a9a9a"/><rect x="27" y="306.12" width="1.4" height="0.7" fill="#9a9a9a"/><rect x="27" y="310.80" width="1.4" height="0.7" fill="#9a9a9a"/><rect x="19.8" y="315.48" width="8.7" height="0.7" fill="#7a7a7a"/><text x="21.6" y="321.38" font-size="5.2" fill="#a5a5a5" font-family="Liberation Sans">9</text><rect x="27" y="320.16" width="1.4" height="0.7" fill="#9a9a9a"/><rect x="27" y="324.84" width="1.4" height="0.7" fill="#9a9a9a"/><rect x="27" y="329.52" width="1.4" height="0.7" fill="#9a9a9a"/><rect x="19.8" y="334.20" width="8.7" height="0.7" fill="#7a7a7a"/><text x="21.6" y="340.10" font-size="5.2" fill="#a5a5a5" font-family="Liberation Sans">1</text><text x="21.6" y="345.60" font-size="5.2" fill="#a5a5a5" font-family="Liberation Sans">0</text><rect x="27" y="338.88" width="1.4" height="0.7" fill="#9a9a9a"/><rect x="27" y="343.56" width="1.4" height="0.7" fill="#9a9a9a"/><rect x="27" y="348.24" width="1.4" height="0.7" fill="#9a9a9a"/><rect x="19.8" y="352.92" width="8.7" height="0.7" fill="#7a7a7a"/><text x="21.6" y="358.82" font-size="5.2" fill="#a5a5a5" font-family="Liberation Sans">1</text><text x="21.6" y="364.32" font-size="5.2" fill="#a5a5a5" font-family="Liberation Sans">1</text><rect x="27" y="357.60" width="1.4" height="0.7" fill="#9a9a9a"/><rect x="27" y="362.28" width="1.4" height="0.7" fill="#9a9a9a"/><rect x="27" y="366.96" width="1.4" height="0.7" fill="#9a9a9a"/><rect x="19.8" y="371.64" width="8.7" height="0.7" fill="#7a7a7a"/><text x="21.6" y="377.54" font-size="5.2" fill="#a5a5a5" font-family="Liberation Sans">1</text><text x="21.6" y="383.04" font-size="5.2" fill="#a5a5a5" font-family="Liberation Sans">2</text><rect x="27" y="376.32" width="1.4" height="0.7" fill="#9a9a9a"/><rect x="27" y="381.00" width="1.4" height="0.7" fill="#9a9a9a"/><rect x="27" y="385.68" width="1.4" height="0.7" fill="#9a9a9a"/><rect x="19.8" y="390.36" width="8.7" height="0.7" fill="#7a7a7a"/><text x="21.6" y="396.26" font-size="5.2" fill="#a5a5a5" font-family="Liberation Sans">1</text><text x="21.6" y="401.76" font-size="5.2" fill="#a5a5a5" font-family="Liberation Sans">3</text><rect x="27" y="395.04" width="1.4" height="0.7" fill="#9a9a9a"/><rect x="27" y="399.72" width="1.4" height="0.7" fill="#9a9a9a"/><rect x="27" y="404.40" width="1.4" height="0.7" fill="#9a9a9a"/><rect x="19.8" y="409.08" width="8.7" height="0.7" fill="#7a7a7a"/><text x="21.6" y="414.98" font-size="5.2" fill="#a5a5a5" font-family="Liberation Sans">1</text><text x="21.6" y="420.48" font-size="5.2" fill="#a5a5a5" font-family="Liberation Sans">4</text><rect x="27" y="413.76" width="1.4" height="0.7" fill="#9a9a9a"/><rect x="27" y="418.44" width="1.4" height="0.7" fill="#9a9a9a"/><rect x="27" y="423.12" width="1.4" height="0.7" fill="#9a9a9a"/><rect x="19.8" y="427.80" width="8.7" height="0.7" fill="#7a7a7a"/><text x="21.6" y="433.70" font-size="5.2" fill="#a5a5a5" font-family="Liberation Sans">1</text><text x="21.6" y="439.20" font-size="5.2" fill="#a5a5a5" font-family="Liberation Sans">5</text><rect x="27" y="432.48" width="1.4" height="0.7" fill="#9a9a9a"/><rect x="27" y="437.16" width="1.4" height="0.7" fill="#9a9a9a"/><rect x="27" y="441.84" width="1.4" height="0.7" fill="#9a9a9a"/><rect x="19.8" y="446.52" width="8.7" height="0.7" fill="#7a7a7a"/><text x="21.6" y="452.42" font-size="5.2" fill="#a5a5a5" font-family="Liberation Sans">1</text><text x="21.6" y="457.92" font-size="5.2" fill="#a5a5a5" font-family="Liberation Sans">6</text><rect x="27" y="451.20" width="1.4" height="0.7" fill="#9a9a9a"/><rect x="27" y="455.88" width="1.4" height="0.7" fill="#9a9a9a"/><rect x="27" y="460.56" width="1.4" height="0.7" fill="#9a9a9a"/><rect x="19.8" y="465.24" width="8.7" height="0.7" fill="#7a7a7a"/><text x="21.6" y="471.14" font-size="5.2" fill="#a5a5a5" font-family="Liberation Sans">1</text><text x="21.6" y="476.64" font-size="5.2" fill="#a5a5a5" font-family="Liberation Sans">7</text><rect x="27" y="469.92" width="1.4" height="0.7" fill="#9a9a9a"/><rect x="27" y="474.60" width="1.4" height="0.7" fill="#9a9a9a"/><rect x="27" y="479.28" width="1.4" height="0.7" fill="#9a9a9a"/><rect x="19.8" y="483.96" width="8.7" height="0.7" fill="#7a7a7a"/><text x="21.6" y="489.86" font-size="5.2" fill="#a5a5a5" font-family="Liberation Sans">1</text><text x="21.6" y="495.36" font-size="5.2" fill="#a5a5a5" font-family="Liberation Sans">8</text><rect x="27" y="488.64" width="1.4" height="0.7" fill="#9a9a9a"/><rect x="27" y="493.32" width="1.4" height="0.7" fill="#9a9a9a"/><rect x="27" y="498.00" width="1.4" height="0.7" fill="#9a9a9a"/><rect x="19.8" y="502.68" width="8.7" height="0.7" fill="#7a7a7a"/><text x="21.6" y="508.58" font-size="5.2" fill="#a5a5a5" font-family="Liberation Sans">1</text><text x="21.6" y="514.08" font-size="5.2" fill="#a5a5a5" font-family="Liberation Sans">9</text><rect x="27" y="507.36" width="1.4" height="0.7" fill="#9a9a9a"/><rect x="27" y="512.04" width="1.4" height="0.7" fill="#9a9a9a"/><rect x="27" y="516.72" width="1.4" height="0.7" fill="#9a9a9a"/><rect x="19.8" y="521.40" width="8.7" height="0.7" fill="#7a7a7a"/><text x="21.6" y="527.30" font-size="5.2" fill="#a5a5a5" font-family="Liberation Sans">2</text><text x="21.6" y="532.80" font-size="5.2" fill="#a5a5a5" font-family="Liberation Sans">0</text><rect x="27" y="526.08" width="1.4" height="0.7" fill="#9a9a9a"/><rect x="27" y="530.76" width="1.4" height="0.7" fill="#9a9a9a"/><rect x="27" y="535.44" width="1.4" height="0.7" fill="#9a9a9a"/><rect x="19.8" y="540.12" width="8.7" height="0.7" fill="#7a7a7a"/><text x="21.6" y="546.02" font-size="5.2" fill="#a5a5a5" font-family="Liberation Sans">2</text><text x="21.6" y="551.52" font-size="5.2" fill="#a5a5a5" font-family="Liberation Sans">1</text><rect x="27" y="544.80" width="1.4" height="0.7" fill="#9a9a9a"/><rect x="27" y="549.48" width="1.4" height="0.7" fill="#9a9a9a"/><rect x="27" y="554.16" width="1.4" height="0.7" fill="#9a9a9a"/><rect x="19.8" y="558.84" width="8.7" height="0.7" fill="#7a7a7a"/><text x="21.6" y="564.74" font-size="5.2" fill="#a5a5a5" font-family="Liberation Sans">2</text><text x="21.6" y="570.24" font-size="5.2" fill="#a5a5a5" font-family="Liberation Sans">2</text><rect x="27" y="563.52" width="1.4" height="0.7" fill="#9a9a9a"/></svg>
<div class="a" style="left:186px;top:146px;width:422px;height:323px;background:#181818;"></div>
<div class="a" style="left:187px;top:147px;width:420px;height:321px;background:#ffffff;"></div>
<div class="a" style="left:20.5px;top:566.2px;width:744.5px;height:7.6px;background:linear-gradient(#3c3c3c,#4a4a4a);"></div>
<div class="a" style="left:44px;top:566.2px;width:100px;height:7.6px;background:linear-gradient(#4e4e4e,#595959);"></div>
<div class="t" style="left:26px;top:567.81px;font-size:5.3px;color:#d0d0d0;font-weight:normal;transform:scaleX(0.95);transform-origin:0 0;">100%</div>
<svg class="a" style="left:45.5px;top:567.3px;" width="7" height="5.5" viewBox="0 0 7 5.5"><path d="M0.5 1.5 L0.5 5 L5.5 5 L5.5 3.5 M2 3.5 Q2.5 1 5.5 1 M4.3 0 L5.8 1 L4.3 2" fill="none" stroke="#cfcfcf" stroke-width="0.7"/></svg>
<div class="t" style="left:74.5px;top:567.81px;font-size:5.3px;color:#d0d0d0;font-weight:normal;transform:scaleX(0.95);transform-origin:0 0;">Doc: 1.57M/0 bytes</div>
<svg class="a" style="left:140px;top:567.6px;" width="4" height="5" viewBox="0 0 4 5"><path d="M0.3 0.3 L3.5 2.4 L0.3 4.5Z" fill="#e5e5e5"/></svg>
<div class="a" style="left:0px;top:573.8px;width:950px;height:1.2px;background:#1d1d24;"></div>
<div class="a" style="left:765px;top:31px;width:8px;height:543px;background:linear-gradient(90deg,#3c3c3c,#4a4a4a);"></div>
<div class="a" style="left:773px;top:31px;width:2px;height:543px;background:#333333;"></div>
<div class="a" style="left:773px;top:31px;width:177px;height:6px;background:#343434;"></div>
<svg class="a" style="left:787px;top:32.5px;" width="6" height="3" viewBox="0 0 6 3"><path d="M0.3 0.2 L1.6 1.3 L0.3 2.4Z M2.8 0.2 L4.1 1.3 L2.8 2.4Z" fill="#bbb"/></svg>
<svg class="a" style="left:943px;top:32.5px;" width="6" height="3" viewBox="0 0 6 3"><path d="M0.3 0.2 L1.6 1.3 L0.3 2.4Z M2.8 0.2 L4.1 1.3 L2.8 2.4Z" fill="#bbb"/></svg>
<div class="a" style="left:775px;top:37px;width:18.3px;height:537px;background:#535353;"></div>
<div class="a" style="left:793.3px;top:37px;width:1.7px;height:537px;background:#333333;"></div>
<div class="a" style="left:775px;top:71.2px;width:18.3px;height:1px;background:#3d3d3d;"></div>
<div class="a" style="left:775px;top:105.3px;width:18.3px;height:1px;background:#3d3d3d;"></div>
<div class="a" style="left:775px;top:125.5px;width:18.3px;height:1px;background:#3d3d3d;"></div>
<div class="a" style="left:775px;top:158.5px;width:18.3px;height:1px;background:#3d3d3d;"></div>
<div class="a" style="left:775px;top:193.5px;width:18.3px;height:1px;background:#3d3d3d;"></div>
<div class="a" style="left:775px;top:228.5px;width:18.3px;height:1px;background:#3d3d3d;"></div>
<div class="a" style="left:775px;top:248.2px;width:18.3px;height:1px;background:#3d3d3d;"></div>
<div class="a" style="left:775px;top:281.4px;width:18.3px;height:1px;background:#3d3d3d;"></div>
<div class="a" style="left:775px;top:301.2px;width:18.3px;height:1px;background:#3d3d3d;"></div>
<div class="a" style="left:775px;top:323.5px;width:18.3px;height:1px;background:#3d3d3d;"></div>
<div class="a" style="left:779.5px;top:39.300000000000004px;width:9px;height:0.9px;background:#444444;"></div>
<div class="a" style="left:779.5px;top:73.8px;width:9px;height:0.9px;background:#444444;"></div>
<div class="a" style="left:779.5px;top:107.5px;width:9px;height:0.9px;background:#444444;"></div>
<div class="a" style="left:779.5px;top:127.79999999999998px;width:9px;height:0.9px;background:#444444;"></div>
<div class="a" style="left:779.5px;top:161.29999999999998px;width:9px;height:0.9px;background:#444444;"></div>
<div class="a" style="left:779.5px;top:196.1px;width:9px;height:0.9px;background:#444444;"></div>
<div class="a" style="left:779.5px;top:231.4px;width:9px;height:0.9px;background:#444444;"></div>
<div class="a" style="left:779.5px;top:251.0px;width:9px;height:0.9px;background:#444444;"></div>
<div class="a" style="left:779.5px;top:284.1px;width:9px;height:0.9px;background:#444444;"></div>
<div class="a" style="left:779.5px;top:304.5px;width:9px;height:0.9px;background:#444444;"></div>
<svg class="a" style="left:779px;top:44.5px;" width="11" height="10" viewBox="0 0 11 10"><rect x="1.5" y="1" width="2.5" height="2" fill="#d4d4d4"/><rect x="1.5" y="4" width="2.5" height="2" fill="#d4d4d4"/><rect x="1.5" y="7" width="2.5" height="2" fill="#d4d4d4"/><path d="M6 1.5 Q9.5 2 9 5.5 Q8.5 8 6.5 8.5" fill="none" stroke="#d4d4d4" stroke-width="1.2"/></svg>
<svg class="a" style="left:779px;top:57.7px;" width="11" height="10" viewBox="0 0 11 10"><path d="M2 1.5 L9.5 5 L2 8.5Z" fill="#d4d4d4"/></svg>
<svg class="a" style="left:779px;top:77.2px;" width="11" height="10" viewBox="0 0 11 10"><circle cx="3.5" cy="3.5" r="2.5" fill="#d4d4d4"/><rect x="7" y="1" width="2" height="2" fill="#d4d4d4"/><rect x="7" y="4" width="2" height="2" fill="#d4d4d4"/><rect x="1" y="7.5" width="8" height="1.5" fill="#d4d4d4"/></svg>
<svg class="a" style="left:779px;top:91.8px;" width="11" height="10" viewBox="0 0 11 10"><circle cx="5" cy="5" r="4.2" fill="#d4d4d4"/><rect x="4.3" y="4" width="1.5" height="4" fill="#535353"/><circle cx="5" cy="2.6" r="0.8" fill="#535353"/></svg>
<svg class="a" style="left:779px;top:111.5px;" width="11" height="10" viewBox="0 0 11 10"><path d="M1.5 1.5 L6 1.5 L6 6 L1.5 6Z M4 4 L9 4 L9 9 L4 9Z" fill="none" stroke="#d4d4d4" stroke-width="0.9"/></svg>
<svg class="a" style="left:779px;top:131.5px;" width="11" height="10" viewBox="0 0 11 10"><path d="M3 1 L4.5 4.5 M5 0.5 L5 4.5 M7.5 1 L6 4.5" stroke="#d4d4d4" stroke-width="0.9"/><rect x="3" y="4.5" width="4.5" height="4.5" fill="#d4d4d4"/></svg>
<svg class="a" style="left:779px;top:145.4px;" width="11" height="10" viewBox="0 0 11 10"><path d="M1 2.5 L6 2.5 M1 7 L6 7" stroke="#d4d4d4" stroke-width="0.9"/><circle cx="7.5" cy="2.5" r="1.5" fill="#d4d4d4"/><circle cx="7.5" cy="7" r="1.8" fill="#d4d4d4"/></svg>
<div class="a" style="left:777px;top:166px;width:13.8px;height:10.6px;background:#383838;border-radius:1px"></div>
<div class="t" style="left:779.3px;top:167.3px;font-size:9.8px;color:#e2e2e2;letter-spacing:-0.5px">A</div>
<div class="a" style="left:787.2px;top:167.2px;width:0.7px;height:8.5px;background:#e2e2e2;"></div>
<svg class="a" style="left:779px;top:180.2px;" width="11" height="10" viewBox="0 0 11 10"><path d="M6 1 L9 1 L9 9.5 L7.5 9.5 L7.5 5 Q3 5.5 3 3 Q3 1 6 1Z" fill="#d4d4d4"/></svg>
<svg class="a" style="left:779px;top:202px;" width="11" height="10" viewBox="0 0 11 10"><path d="M5 1.5 L9.5 1.5 L9.5 8.5 L8 8.5 L8 5 Q5 5 5 3Z" fill="#d4d4d4"/><ellipse cx="3.3" cy="7" rx="2.3" ry="1.8" fill="none" stroke="#d4d4d4" stroke-width="0.8"/></svg>
<svg class="a" style="left:779px;top:215px;" width="11" height="10" viewBox="0 0 11 10"><path d="M5 8 L7 1.5 L9 8 M5.8 5.5 L8.2 5.5" stroke="#d4d4d4" stroke-width="1" fill="none"/><ellipse cx="3.3" cy="7" rx="2.3" ry="1.8" fill="none" stroke="#d4d4d4" stroke-width="0.8"/></svg>
<div class="t" style="left:780px;top:235px;font-family:'Liberation Serif',serif;font-style:italic;font-size:9.5px;color:#d0d0d0">A</div>
<svg class="a" style="left:779px;top:255px;" width="11" height="10" viewBox="0 0 11 10"><rect x="1.5" y="1" width="7.5" height="8" fill="none" stroke="#d4d4d4" stroke-width="1"/><rect x="2.8" y="2.5" width="2" height="2" fill="#d4d4d4"/><rect x="5.8" y="2.5" width="2" height="2" fill="#d4d4d4"/><path d="M1.5 5.5 L9 5.5" stroke="#d4d4d4" stroke-width="0.8"/></svg>
<svg class="a" style="left:779px;top:269.9px;" width="11" height="10" viewBox="0 0 11 10"><rect x="1.5" y="1" width="7" height="8" fill="#d4d4d4"/><path d="M3 3 L7 3 M3 5 L7 5 M3 7 L5.5 7" stroke="#666" stroke-width="0.7"/></svg>
<svg class="a" style="left:779px;top:289.4px;" width="11" height="10" viewBox="0 0 11 10"><circle cx="2.0" cy="1.5" r="0.9" fill="#d4d4d4"/><circle cx="2.0" cy="3.7" r="0.9" fill="#d4d4d4"/><circle cx="2.0" cy="5.9" r="0.9" fill="#d4d4d4"/><circle cx="2.0" cy="8.100000000000001" r="0.9" fill="#d4d4d4"/><circle cx="4.2" cy="1.5" r="0.9" fill="#d4d4d4"/><circle cx="4.2" cy="3.7" r="0.9" fill="#d4d4d4"/><circle cx="4.2" cy="5.9" r="0.9" fill="#d4d4d4"/><circle cx="4.2" cy="8.100000000000001" r="0.9" fill="#d4d4d4"/><circle cx="6.4" cy="1.5" r="0.9" fill="#d4d4d4"/><circle cx="6.4" cy="3.7" r="0.9" fill="#d4d4d4"/><circle cx="6.4" cy="5.9" r="0.9" fill="#d4d4d4"/><circle cx="6.4" cy="8.100000000000001" r="0.9" fill="#d4d4d4"/><circle cx="8.600000000000001" cy="1.5" r="0.9" fill="#d4d4d4"/><circle cx="8.600000000000001" cy="3.7" r="0.9" fill="#d4d4d4"/><circle cx="8.600000000000001" cy="5.9" r="0.9" fill="#d4d4d4"/><circle cx="8.600000000000001" cy="8.100000000000001" r="0.9" fill="#d4d4d4"/></svg>
<svg class="a" style="left:779px;top:309.8px;" width="11" height="10" viewBox="0 0 11 10"><circle cx="5" cy="5" r="4.5" fill="#d4d4d4"/><path d="M3 7.5 Q1.5 3 6.5 2 M7 2.5 Q8.5 7 3.5 8" stroke="#535353" stroke-width="1" fill="none"/></svg>
<div class="a" style="left:795px;top:37px;width:155px;height:9px;background:#444444;"></div>
<div class="a" style="left:821.2px;top:37.5px;width:0.8px;height:8.3px;background:#393939;"></div>
<div class="t" style="left:798.50px;top:39.11px;font-size:5.3px;color:#a8a8a8;font-weight:normal;transform:scaleX(0.9446);transform-origin:0 0;">Libraries</div>
<div class="a" style="left:821.7px;top:37.3px;width:36.09999999999991px;height:8.5px;background:#535353;"></div>
<div class="t" style="left:825.40px;top:39.11px;font-size:5.3px;color:#f2f2f2;font-weight:normal;transform:scaleX(0.9974);transform-origin:0 0;">Adjustments</div>
<div class="a" style="left:878.5px;top:37.5px;width:0.8px;height:8.3px;background:#393939;"></div>
<div class="t" style="left:861.00px;top:39.11px;font-size:5.3px;color:#a8a8a8;font-weight:normal;transform:scaleX(0.9901);transform-origin:0 0;">Styles</div>
<div class="a" style="left:898.5px;top:37.5px;width:0.8px;height:8.3px;background:#393939;"></div>
<div class="t" style="left:882.60px;top:39.11px;font-size:5.3px;color:#a8a8a8;font-weight:normal;transform:scaleX(1.0026);transform-origin:0 0;">Color</div>
<div class="a" style="left:927.9px;top:37.5px;width:0.8px;height:8.3px;background:#393939;"></div>
<div class="t" style="left:902.60px;top:39.11px;font-size:5.3px;color:#a8a8a8;font-weight:normal;transform:scaleX(0.9619);transform-origin:0 0;">Swatches</div>
<svg class="a" style="left:938px;top:39.5px;" width="11" height="5" viewBox="0 0 11 5"><path d="M0.3 1.5 L2.8 1.5 L1.55 3Z" fill="#ccc"/><rect x="4" y="0.5" width="5" height="4" fill="#888"/><path d="M4 1.5 L9 1.5 M4 2.8 L9 2.8" stroke="#555" stroke-width="0.5"/></svg>
<div class="a" style="left:795px;top:46px;width:155px;height:50px;background:#535353;"></div>
<div class="t" style="left:799.30px;top:49.01px;font-size:5.3px;color:#f2f2f2;font-weight:bold;transform:scaleX(0.9727);transform-origin:0 0;">Add an adjustment</div>
<svg class="a" style="left:816.4px;top:57.0px;" width="10" height="9" viewBox="0 0 10 9"><circle cx="5" cy="4.5" r="2" fill="#d8d8d8"/><path d="M5 0 L5 1.5 M5 7.5 L5 9 M0.5 4.5 L2 4.5 M8 4.5 L9.5 4.5 M1.8 1.3 L2.8 2.3 M7.2 6.7 L8.2 7.7 M8.2 1.3 L7.2 2.3 M2.8 6.7 L1.8 7.7" stroke="#d8d8d8" stroke-width="0.8"/></svg>
<svg class="a" style="left:828.6px;top:57.0px;" width="10" height="9" viewBox="0 0 10 9"><path d="M0.5 8 L0.5 6 L1.5 4.5 L2.5 6 L3.5 3.5 L4.5 5 L5.5 2.5 L6.5 4.5 L7.5 3 L8.5 5 L9.5 6 L9.5 8Z" fill="#d8d8d8"/></svg>
<svg class="a" style="left:841px;top:57.0px;" width="10" height="9" viewBox="0 0 10 9"><rect x="0.8" y="0.8" width="8.4" height="7.4" fill="none" stroke="#d8d8d8" stroke-width="0.9"/><path d="M0.8 8 L9 1" stroke="#d8d8d8" stroke-width="1"/><path d="M3.5 0.8 L3.5 8 M6.2 0.8 L6.2 8 M0.8 3.3 L9 3.3 M0.8 5.8 L9 5.8" stroke="#d8d8d8" stroke-width="0.4"/></svg>
<svg class="a" style="left:852.6px;top:57.0px;" width="10" height="9" viewBox="0 0 10 9"><rect x="0.8" y="0.8" width="8.4" height="7.4" fill="#666" stroke="#d8d8d8" stroke-width="0.9"/><path d="M0.8 8.2 L0.8 5.5 L9 1.5 L9 0.8 L0.8 0.8Z" fill="#ddd"/><path d="M1 7 L9 2" stroke="#333" stroke-width="0.8"/></svg>
<svg class="a" style="left:864.8px;top:57.0px;" width="10" height="9" viewBox="0 0 10 9"><path d="M1 1 L9 1 L5 8.5Z" fill="none" stroke="#d8d8d8" stroke-width="1.1"/><path d="M3 2.5 L7 2.5 L5 6Z" fill="#888"/></svg>
<svg class="a" style="left:811px;top:70.6px;" width="10" height="9" viewBox="0 0 10 9"><rect x="0.5" y="1" width="9" height="7" fill="#888" stroke="#d8d8d8" stroke-width="0.7"/><rect x="0.5" y="1" width="9" height="2" fill="#d8d8d8"/><rect x="0.5" y="5" width="4" height="3" fill="#333"/></svg>
<svg class="a" style="left:822.6px;top:70.6px;" width="10" height="9" viewBox="0 0 10 9"><path d="M5 1 L5 8 M1.5 2 L8.5 2 M3 8.5 L7 8.5" stroke="#d8d8d8" stroke-width="0.8"/><path d="M0.3 6 L1.5 2.5 L2.7 6Z M7.3 6 L8.5 2.5 L9.7 6Z" fill="none" stroke="#d8d8d8" stroke-width="0.7"/></svg>
<svg class="a" style="left:834.6px;top:70.6px;" width="10" height="9" viewBox="0 0 10 9"><rect x="0.8" y="0.8" width="8.4" height="7.4" fill="none" stroke="#d8d8d8" stroke-width="0.9"/><rect x="1" y="1" width="4" height="7" fill="#444"/><rect x="5" y="1" width="4" height="7" fill="#ddd"/></svg>
<svg class="a" style="left:846.5px;top:70.6px;" width="10" height="9" viewBox="0 0 10 9"><circle cx="3.5" cy="3.5" r="3" fill="#d8d8d8"/><circle cx="6" cy="5.5" r="3.2" fill="none" stroke="#d8d8d8" stroke-width="1.1"/><circle cx="6" cy="5.5" r="1.5" fill="#777"/></svg>
<svg class="a" style="left:858px;top:70.6px;" width="10" height="9" viewBox="0 0 10 9"><circle cx="5" cy="3" r="2.6" fill="#d8d8d8"/><circle cx="3" cy="6" r="2.6" fill="#d8d8d8"/><circle cx="7" cy="6" r="2.6" fill="#d8d8d8"/><circle cx="5" cy="5" r="1" fill="#555"/></svg>
<svg class="a" style="left:870px;top:70.6px;" width="10" height="9" viewBox="0 0 10 9"><rect x="0.5" y="0.8" width="9" height="7.4" fill="none" stroke="#d8d8d8" stroke-width="0.8"/><path d="M0.5 3.3 L9.5 3.3 M0.5 5.8 L9.5 5.8 M3.5 0.8 L3.5 8.2 M6.5 0.8 L6.5 8.2" stroke="#d8d8d8" stroke-width="0.8"/></svg>
<svg class="a" style="left:817px;top:83.8px;" width="10" height="9" viewBox="0 0 10 9"><rect x="0.8" y="0.8" width="8.4" height="7.4" fill="#555" stroke="#d8d8d8" stroke-width="0.9"/><path d="M2 7 Q4 3 8 2" stroke="#eee" stroke-width="1.5" fill="none"/></svg>
<svg class="a" style="left:828.8px;top:83.8px;" width="10" height="9" viewBox="0 0 10 9"><rect x="0.8" y="0.8" width="8.4" height="7.4" fill="#888" stroke="#d8d8d8" stroke-width="0.9"/><path d="M1 8 L9 1" stroke="#ddd" stroke-width="1.5"/></svg>
<svg class="a" style="left:840.6px;top:83.8px;" width="10" height="9" viewBox="0 0 10 9"><rect x="0.8" y="0.8" width="8.4" height="7.4" fill="#ddd" stroke="#d8d8d8" stroke-width="0.9"/><path d="M0.8 8.2 L9.2 2 L9.2 8.2Z" fill="#333"/><path d="M1 7 L9 1.5" stroke="#eee" stroke-width="1"/></svg>
<svg class="a" style="left:852.5px;top:83.8px;" width="10" height="9" viewBox="0 0 10 9"><rect x="0.8" y="0.8" width="8.4" height="7.4" fill="#999" stroke="#d8d8d8" stroke-width="0.9"/><path d="M1 1 L5 4.5 L1 8 M9 1 L5 4.5 L9 8" stroke="#444" stroke-width="1" fill="none"/></svg>
<svg class="a" style="left:864.4px;top:83.8px;" width="10" height="9" viewBox="0 0 10 9"><defs><linearGradient id="gm"><stop offset="0" stop-color="#444"/><stop offset="1" stop-color="#eee"/></linearGradient></defs><rect x="0.8" y="0.8" width="8.4" height="7.4" fill="url(#gm)" stroke="#d8d8d8" stroke-width="0.9"/></svg>
<div class="a" style="left:795px;top:96px;width:155px;height:2px;background:#333333;"></div>
<div class="a" style="left:795px;top:98px;width:155px;height:8px;background:#444444;"></div>
<div class="a" style="left:795px;top:97.8px;width:21.200000000000045px;height:8px;background:#535353;"></div>
<div class="t" style="left:797.60px;top:99.41px;font-size:5.3px;color:#f2f2f2;font-weight:normal;transform:scaleX(0.9560);transform-origin:0 0;">Layers</div>
<div class="a" style="left:843.0px;top:98.3px;width:0.8px;height:7.5px;background:#393939;"></div>
<div class="t" style="left:819.50px;top:99.41px;font-size:5.3px;color:#a8a8a8;font-weight:normal;transform:scaleX(0.9244);transform-origin:0 0;">Channels</div>
<div class="a" style="left:864.1px;top:98.3px;width:0.8px;height:7.5px;background:#393939;"></div>
<div class="t" style="left:847.70px;top:99.41px;font-size:5.3px;color:#a8a8a8;font-weight:normal;transform:scaleX(0.9379);transform-origin:0 0;">Paths</div>
<svg class="a" style="left:938px;top:100px;" width="11" height="5" viewBox="0 0 11 5"><path d="M0.3 1.5 L2.8 1.5 L1.55 3Z" fill="#ccc"/><rect x="4" y="0.5" width="5" height="4" fill="#888"/><path d="M4 1.5 L9 1.5 M4 2.8 L9 2.8" stroke="#555" stroke-width="0.5"/></svg>
<div class="a" style="left:795px;top:106px;width:155px;height:43px;background:#535353;"></div>
<div class="a" style="left:797.8px;top:109px;width:43.2px;height:8.2px;background:linear-gradient(#606060,#505050);border:0.6px solid #3d3d3d;border-radius:1px"></div>
<svg class="a" style="left:799.5px;top:110.5px;" width="6" height="6" viewBox="0 0 6 6"><circle cx="3.5" cy="2.5" r="1.8" fill="none" stroke="#ddd" stroke-width="0.8"/><path d="M2.2 3.8 L0.5 5.5" stroke="#ddd" stroke-width="0.9"/></svg>
<div class="t" style="left:806px;top:110.93px;font-size:5.4px;color:#e0e0e0;font-weight:normal;transform:scaleX(0.95);transform-origin:0 0;">Kind</div>
<svg class="a" style="left:836px;top:110.3px;" width="4" height="6" viewBox="0 0 4 6"><path d="M0.3 2.2 L1.8 0.5 L3.3 2.2Z M0.3 3.5 L1.8 5.2 L3.3 3.5Z" fill="#ddd"/></svg>
<svg class="a" style="left:845px;top:107.8px;" width="70" height="10" viewBox="0 0 70 10"><rect x="1" y="1.5" width="7.5" height="6.5" fill="#999" stroke="#ddd" stroke-width="0.8"/><rect x="2.5" y="5" width="3" height="2.5" fill="#444"/><circle cx="16.5" cy="4.8" r="3.4" fill="#ddd"/><path d="M14.5 6.5 Q14 3 18 2.5" stroke="#555" stroke-width="0.9" fill="none"/><text x="28" y="8.3" font-family="Liberation Serif" font-size="9" fill="#ddd" text-anchor="middle">T</text><path d="M38 2 L43 2 M38 7.5 L43 7.5 M38 2 L38 7.5 M43 2 L43 7.5" fill="none" stroke="#ddd" stroke-width="0.8"/><rect x="37" y="1" width="2" height="2" fill="#ddd"/><rect x="42" y="1" width="2" height="2" fill="#ddd"/><rect x="37" y="6.5" width="2" height="2" fill="#ddd"/><rect x="42" y="6.5" width="2" height="2" fill="#ddd"/><path d="M50 4 L50 1.8 Q50 1 51 1 L53 1 L55 3 L55 8.5 L50 8.5" fill="none" stroke="#ddd" stroke-width="0.9"/><rect x="49" y="4.5" width="3.5" height="3.5" fill="#ddd"/><rect x="61.8" y="0.5" width="3.5" height="9" rx="0.6" fill="#333"/><rect x="61.8" y="0.5" width="3.5" height="3.5" rx="0.6" fill="#aaa"/></svg>
<div class="a" style="left:795px;top:119.6px;width:155px;height:0.8px;background:#4a4a4a;"></div>
<div class="a" style="left:797.8px;top:123.2px;width:62px;height:8px;background:linear-gradient(#606060,#505050);border:0.6px solid #3d3d3d;border-radius:1px"></div>
<div class="t" style="left:801.5px;top:124.93px;font-size:5.4px;color:#e0e0e0;font-weight:normal;transform:scaleX(0.95);transform-origin:0 0;">Normal</div>
<svg class="a" style="left:855px;top:124.2px;" width="4" height="6" viewBox="0 0 4 6"><path d="M0.3 2.2 L1.8 0.5 L3.3 2.2Z M0.3 3.5 L1.8 5.2 L3.3 3.5Z" fill="#ddd"/></svg>
<div class="t" style="left:864.2px;top:124.93px;font-size:5.4px;color:#d8d8d8;font-weight:normal;transform:scaleX(0.92);transform-origin:0 0;">Opacity:</div>
<div class="a" style="left:885px;top:123px;width:17px;height:8.4px;background:#2e2e2e;"></div>
<div class="t" style="left:886.2px;top:125.01px;font-size:5.3px;color:#eeeeee;font-weight:normal;transform:scaleX(0.92);transform-origin:0 0;">100%</div>
<div class="a" style="left:902.5px;top:123px;width:8.6px;height:8.4px;background:#5d5d5d;"></div>
<div class="a" style="left:906px;top:126.8px;width:1.6px;height:1px;background:#ddd;"></div>
<div class="a" style="left:795px;top:134.2px;width:155px;height:0.8px;background:#4a4a4a;"></div>
<div class="t" style="left:797.5px;top:138.93px;font-size:5.4px;color:#d8d8d8;font-weight:normal;transform:scaleX(0.92);transform-origin:0 0;">Lock:</div>
<svg class="a" style="left:812px;top:137px;" width="50" height="9" viewBox="0 0 50 9"><rect x="1" y="1" width="6" height="6" fill="#777" stroke="#999" stroke-width="0.5"/><path d="M1 4 L7 4 M4 1 L4 7" stroke="#555" stroke-width="0.7"/><path d="M11 7.5 L18 1" stroke="#aaa" stroke-width="1.1"/><path d="M10 8 Q10 6 11.5 6.2 L12 7 Q11.5 8.3 10 8Z" fill="#aaa"/><path d="M26.5 0.5 L26.5 8 M22.8 4.3 L30.2 4.3" stroke="#ddd" stroke-width="0.8"/><path d="M25.3 1.5 L26.5 0.3 L27.7 1.5 M25.3 7 L26.5 8.2 L27.7 7 M23.8 3.1 L22.6 4.3 L23.8 5.5 M29.2 3.1 L30.4 4.3 L29.2 5.5" stroke="#ddd" stroke-width="0.7" fill="none"/><rect x="34.5" y="4" width="5.5" height="4.5" fill="#ddd"/><path d="M35.5 4 L35.5 2.5 Q37.25 0.3 39 2.5 L39 4" stroke="#ddd" stroke-width="0.9" fill="none"/></svg>
<div class="t" style="left:876px;top:138.93px;font-size:5.4px;color:#d8d8d8;font-weight:normal;transform:scaleX(0.92);transform-origin:0 0;">Fill:</div>
<div class="a" style="left:885px;top:136.6px;width:17px;height:8.4px;background:#2e2e2e;"></div>
<div class="t" style="left:886.2px;top:138.61px;font-size:5.3px;color:#eeeeee;font-weight:normal;transform:scaleX(0.92);transform-origin:0 0;">100%</div>
<div class="a" style="left:902.5px;top:136.6px;width:8.6px;height:8.4px;background:#5d5d5d;"></div>
<div class="a" style="left:906px;top:140.4px;width:1.6px;height:1px;background:#ddd;"></div>
<div class="a" style="left:795px;top:148.5px;width:148px;height:415.5px;background:#474747;"></div>
<div class="a" style="left:943px;top:148.5px;width:7px;height:415.5px;background:#3f3f3f;"></div>
<div class="a" style="left:795px;top:148.5px;width:148px;height:0.8px;background:#3a3a3a;"></div>
<div class="a" style="left:810px;top:149px;width:133px;height:18.8px;background:#6f8299;"></div>
<div class="a" style="left:795px;top:168.2px;width:148px;height:16px;background:#505050;"></div>
<div class="a" style="left:795px;top:167.8px;width:148px;height:0.9px;background:#3a3a3a;"></div>
<div class="a" style="left:795px;top:184.2px;width:148px;height:0.9px;background:#3a3a3a;"></div>
<div class="a" style="left:809.4px;top:149px;width:0.7px;height:35.5px;background:#3c3c3c;"></div>
<svg class="a" style="left:799px;top:155.5px;" width="8" height="6" viewBox="0 0 8 6"><path d="M0.6 3 Q3.6 0 6.6 3 Q3.6 6 0.6 3Z" fill="none" stroke="#d5d5d5" stroke-width="0.8"/><circle cx="3.6" cy="3" r="1.1" fill="#d5d5d5"/></svg>
<svg class="a" style="left:799px;top:173.2px;" width="8" height="6" viewBox="0 0 8 6"><path d="M0.6 3 Q3.6 0 6.6 3 Q3.6 6 0.6 3Z" fill="none" stroke="#d5d5d5" stroke-width="0.8"/><circle cx="3.6" cy="3" r="1.1" fill="#d5d5d5"/></svg>
<svg class="a" style="left:811px;top:149.5px;" width="19" height="18" viewBox="0 0 19 18"><path d="M0.5 5 L0.5 0.5 L5 0.5 M13.5 0.5 L18 0.5 L18 5 M18 12.5 L18 17 L13.5 17 M5 17 L0.5 17 L0.5 12.5" stroke="#c8d0dc" stroke-width="0.8" fill="none"/></svg>
<div class="t" style="left:815.3px;top:151.4px;font-family:'Liberation Serif',serif;font-size:12px;color:#f2f2f2">T</div>
<div class="t" style="left:832px;top:156.43px;font-size:5.4px;color:#f0f0f0;font-weight:normal;transform:scaleX(0.95);transform-origin:0 0;">Layer 1</div>
<div class="a" style="left:811.7px;top:169.5px;width:15.4px;height:12.6px;background:#ffffff;border:0.5px solid #333"></div>
<div class="t" style="left:832px;top:174.03px;font-size:5.4px;color:#e2e2e2;font-weight:normal;transform:scaleX(0.95);transform-origin:0 0;">Layer 0</div>
<div class="a" style="left:795px;top:564px;width:155px;height:9.8px;background:#535353;"></div>
<svg class="a" style="left:850px;top:565px;" width="95" height="8" viewBox="0 0 95 8"><path d="M3 4 L5 4 M1.2 4 Q1.2 2 3 2 M1.2 4 Q1.2 6 3 6 M6.8 4 Q6.8 2 5 2 M6.8 4 Q6.8 6 5 6" stroke="#aaa" stroke-width="0.7" fill="none"/><text x="14" y="6.5" font-size="7" font-style="italic" font-family="Liberation Serif" fill="#ddd">fx</text><rect x="21" y="6" width="1" height="1" fill="#ccc"/><rect x="26.5" y="1.5" width="7" height="5.5" fill="#ddd"/><circle cx="30" cy="4.25" r="1.7" fill="#444"/><circle cx="42" cy="4.2" r="3" fill="#ddd"/><path d="M40.2 5.8 Q39.8 3 43 2.2" stroke="#555" stroke-width="0.8" fill="none"/><rect x="45.5" y="6" width="1" height="1" fill="#ccc"/><path d="M53 2 L56 2 L57 3 L60 3 L60 7.5 L53 7.5Z" fill="#ddd"/><rect x="67" y="1.2" width="6" height="6.3" fill="#ddd"/><rect x="68" y="2.5" width="2.5" height="2.5" fill="#666"/><path d="M80.5 2 L86.5 2 M82.5 1 L84.5 1 M81 2.5 L81.6 7.5 L85.4 7.5 L86 2.5Z" fill="#ccc" stroke="#ccc" stroke-width="0.6"/></svg>
<div class="a" style="left:206px;top:11.5px;width:101px;height:359.5px;background:#f0f0f0;border:1px solid #a4a4a4;box-shadow:1.5px 1.5px 1.5px rgba(0,0,0,.45)"></div>
<div class="t" style="left:216.3px;top:15.54px;font-size:6.8px;color:#141414;font-weight:normal;transform:scaleX(0.845);transform-origin:0 0;-webkit-text-stroke:0.06px #141414;">Arrange</div>
<svg class="a" style="left:298.5px;top:15.3px;" width="4" height="5" viewBox="0 0 4 5"><path d="M0.5 0.3 L3 2.4 L0.5 4.5Z" fill="#222"/></svg>
<div class="t" style="left:216.3px;top:24.93px;font-size:6.8px;color:#141414;font-weight:normal;transform:scaleX(0.845);transform-origin:0 0;-webkit-text-stroke:0.06px #141414;">Workspace</div>
<svg class="a" style="left:298.5px;top:24.687px;" width="4" height="5" viewBox="0 0 4 5"><path d="M0.5 0.3 L3 2.4 L0.5 4.5Z" fill="#222"/></svg>
<div class="a" style="left:208px;top:33.887px;width:97px;height:0.8px;background:#c9c9c9;"></div>
<div class="a" style="left:208px;top:34.687px;width:97px;height:0.7px;background:#ffffff;"></div>
<div class="t" style="left:216.3px;top:38.83px;font-size:6.8px;color:#141414;font-weight:normal;transform:scaleX(0.845);transform-origin:0 0;-webkit-text-stroke:0.06px #141414;">Browse Extensions Online...</div>
<div class="t" style="left:216.3px;top:48.21px;font-size:6.8px;color:#141414;font-weight:normal;transform:scaleX(0.845);transform-origin:0 0;-webkit-text-stroke:0.06px #141414;">Extensions</div>
<svg class="a" style="left:298.5px;top:47.971px;" width="4" height="5" viewBox="0 0 4 5"><path d="M0.5 0.3 L3 2.4 L0.5 4.5Z" fill="#222"/></svg>
<div class="a" style="left:208px;top:57.171px;width:97px;height:0.8px;background:#c9c9c9;"></div>
<div class="a" style="left:208px;top:57.971px;width:97px;height:0.7px;background:#ffffff;"></div>
<div class="t" style="left:216.3px;top:62.11px;font-size:6.8px;color:#141414;font-weight:normal;transform:scaleX(0.845);transform-origin:0 0;-webkit-text-stroke:0.06px #141414;">3D</div>
<div class="t" style="left:216.3px;top:71.50px;font-size:6.8px;color:#141414;font-weight:normal;transform:scaleX(0.845);transform-origin:0 0;-webkit-text-stroke:0.06px #141414;">Actions</div>
<div class="t" style="right:652.7px;top:71.50px;font-size:6.8px;color:#141414;font-weight:normal;transform:scaleX(0.845);transform-origin:100% 0;-webkit-text-stroke:0.06px #141414;">Alt+F9</div>
<svg class="a" style="left:208.5px;top:80.542px;" width="6" height="6" viewBox="0 0 6 6"><path d="M0.6 2.8 L2.1 4.6 L5 0.6" stroke="#141414" stroke-width="1.1" fill="none"/></svg>
<div class="t" style="left:216.3px;top:80.89px;font-size:6.8px;color:#141414;font-weight:normal;transform:scaleX(0.845);transform-origin:0 0;-webkit-text-stroke:0.06px #141414;">Adjustments</div>
<div class="t" style="left:216.3px;top:90.27px;font-size:6.8px;color:#141414;font-weight:normal;transform:scaleX(0.845);transform-origin:0 0;-webkit-text-stroke:0.06px #141414;">Brush</div>
<div class="t" style="right:652.7px;top:90.27px;font-size:6.8px;color:#141414;font-weight:normal;transform:scaleX(0.845);transform-origin:100% 0;-webkit-text-stroke:0.06px #141414;">F5</div>
<div class="t" style="left:216.3px;top:99.66px;font-size:6.8px;color:#141414;font-weight:normal;transform:scaleX(0.845);transform-origin:0 0;-webkit-text-stroke:0.06px #141414;">Brush Presets</div>
<div class="t" style="left:216.3px;top:109.05px;font-size:6.8px;color:#141414;font-weight:normal;transform:scaleX(0.845);transform-origin:0 0;-webkit-text-stroke:0.06px #141414;">Channels</div>
<div class="a" style="left:208px;top:116.29px;width:96.8px;height:8.9px;background:#3797f5;"></div>
<svg class="a" style="left:208.5px;top:118.09px;" width="6" height="6" viewBox="0 0 6 6"><path d="M0.6 2.8 L2.1 4.6 L5 0.6" stroke="#ffffff" stroke-width="1.1" fill="none"/></svg>
<div class="t" style="left:216.3px;top:118.43px;font-size:6.8px;color:#ffffff;font-weight:normal;transform:scaleX(0.845);transform-origin:0 0;-webkit-text-stroke:0.06px #ffffff;">Character</div>
<div class="t" style="left:216.3px;top:127.82px;font-size:6.8px;color:#141414;font-weight:normal;transform:scaleX(0.845);transform-origin:0 0;-webkit-text-stroke:0.06px #141414;">Character Styles</div>
<div class="t" style="left:216.3px;top:137.21px;font-size:6.8px;color:#141414;font-weight:normal;transform:scaleX(0.845);transform-origin:0 0;-webkit-text-stroke:0.06px #141414;">Clone Source</div>
<div class="t" style="left:216.3px;top:146.59px;font-size:6.8px;color:#141414;font-weight:normal;transform:scaleX(0.845);transform-origin:0 0;-webkit-text-stroke:0.06px #141414;">Color</div>
<div class="t" style="right:652.7px;top:146.59px;font-size:6.8px;color:#141414;font-weight:normal;transform:scaleX(0.845);transform-origin:100% 0;-webkit-text-stroke:0.06px #141414;">F6</div>
<div class="t" style="left:216.3px;top:155.98px;font-size:6.8px;color:#141414;font-weight:normal;transform:scaleX(0.845);transform-origin:0 0;-webkit-text-stroke:0.06px #141414;">Device Preview</div>
<div class="t" style="left:216.3px;top:165.37px;font-size:6.8px;color:#141414;font-weight:normal;transform:scaleX(0.845);transform-origin:0 0;-webkit-text-stroke:0.06px #141414;">Glyphs</div>
<div class="t" style="left:216.3px;top:174.76px;font-size:6.8px;color:#141414;font-weight:normal;transform:scaleX(0.845);transform-origin:0 0;-webkit-text-stroke:0.06px #141414;">Histogram</div>
<div class="t" style="left:216.3px;top:184.14px;font-size:6.8px;color:#141414;font-weight:normal;transform:scaleX(0.845);transform-origin:0 0;-webkit-text-stroke:0.06px #141414;">History</div>
<div class="t" style="left:216.3px;top:193.53px;font-size:6.8px;color:#141414;font-weight:normal;transform:scaleX(0.845);transform-origin:0 0;-webkit-text-stroke:0.06px #141414;">Info</div>
<div class="t" style="right:652.7px;top:193.53px;font-size:6.8px;color:#141414;font-weight:normal;transform:scaleX(0.845);transform-origin:100% 0;-webkit-text-stroke:0.06px #141414;">F8</div>
<div class="t" style="left:216.3px;top:202.92px;font-size:6.8px;color:#141414;font-weight:normal;transform:scaleX(0.845);transform-origin:0 0;-webkit-text-stroke:0.06px #141414;">Layer Comps</div>
<svg class="a" style="left:208.5px;top:211.96px;" width="6" height="6" viewBox="0 0 6 6"><path d="M0.6 2.8 L2.1 4.6 L5 0.6" stroke="#141414" stroke-width="1.1" fill="none"/></svg>
<div class="t" style="left:216.3px;top:212.30px;font-size:6.8px;color:#141414;font-weight:normal;transform:scaleX(0.845);transform-origin:0 0;-webkit-text-stroke:0.06px #141414;">Layers</div>
<div class="t" style="right:652.7px;top:212.30px;font-size:6.8px;color:#141414;font-weight:normal;transform:scaleX(0.845);transform-origin:100% 0;-webkit-text-stroke:0.06px #141414;">F7</div>
<div class="t" style="left:216.3px;top:221.69px;font-size:6.8px;color:#141414;font-weight:normal;transform:scaleX(0.845);transform-origin:0 0;-webkit-text-stroke:0.06px #141414;">Libraries</div>
<div class="t" style="left:216.3px;top:231.08px;font-size:6.8px;color:#141414;font-weight:normal;transform:scaleX(0.845);transform-origin:0 0;-webkit-text-stroke:0.06px #141414;">Measurement Log</div>
<div class="t" style="left:216.3px;top:240.46px;font-size:6.8px;color:#141414;font-weight:normal;transform:scaleX(0.845);transform-origin:0 0;-webkit-text-stroke:0.06px #141414;">Navigator</div>
<div class="t" style="left:216.3px;top:249.85px;font-size:6.8px;color:#141414;font-weight:normal;transform:scaleX(0.845);transform-origin:0 0;-webkit-text-stroke:0.06px #141414;">Notes</div>
<div class="t" style="left:216.3px;top:259.24px;font-size:6.8px;color:#141414;font-weight:normal;transform:scaleX(0.845);transform-origin:0 0;-webkit-text-stroke:0.06px #141414;">Paragraph</div>
<div class="t" style="left:216.3px;top:268.63px;font-size:6.8px;color:#141414;font-weight:normal;transform:scaleX(0.845);transform-origin:0 0;-webkit-text-stroke:0.06px #141414;">Paragraph Styles</div>
<div class="t" style="left:216.3px;top:278.01px;font-size:6.8px;color:#141414;font-weight:normal;transform:scaleX(0.845);transform-origin:0 0;-webkit-text-stroke:0.06px #141414;">Paths</div>
<div class="t" style="left:216.3px;top:287.40px;font-size:6.8px;color:#141414;font-weight:normal;transform:scaleX(0.845);transform-origin:0 0;-webkit-text-stroke:0.06px #141414;">Properties</div>
<div class="t" style="left:216.3px;top:296.79px;font-size:6.8px;color:#141414;font-weight:normal;transform:scaleX(0.845);transform-origin:0 0;-webkit-text-stroke:0.06px #141414;">Styles</div>
<div class="t" style="left:216.3px;top:306.17px;font-size:6.8px;color:#141414;font-weight:normal;transform:scaleX(0.845);transform-origin:0 0;-webkit-text-stroke:0.06px #141414;">Swatches</div>
<div class="t" style="left:216.3px;top:315.56px;font-size:6.8px;color:#141414;font-weight:normal;transform:scaleX(0.845);transform-origin:0 0;-webkit-text-stroke:0.06px #141414;">Timeline</div>
<div class="t" style="left:216.3px;top:324.95px;font-size:6.8px;color:#141414;font-weight:normal;transform:scaleX(0.845);transform-origin:0 0;-webkit-text-stroke:0.06px #141414;">Tool Presets</div>
<div class="a" style="left:208px;top:333.904px;width:97px;height:0.8px;background:#c9c9c9;"></div>
<div class="a" style="left:208px;top:334.704px;width:97px;height:0.7px;background:#ffffff;"></div>
<svg class="a" style="left:208.5px;top:338.501px;" width="6" height="6" viewBox="0 0 6 6"><path d="M0.6 2.8 L2.1 4.6 L5 0.6" stroke="#141414" stroke-width="1.1" fill="none"/></svg>
<div class="t" style="left:216.3px;top:338.84px;font-size:6.8px;color:#141414;font-weight:normal;transform:scaleX(0.845);transform-origin:0 0;-webkit-text-stroke:0.06px #141414;">Options</div>
<svg class="a" style="left:208.5px;top:347.888px;" width="6" height="6" viewBox="0 0 6 6"><path d="M0.6 2.8 L2.1 4.6 L5 0.6" stroke="#141414" stroke-width="1.1" fill="none"/></svg>
<div class="t" style="left:216.3px;top:348.23px;font-size:6.8px;color:#141414;font-weight:normal;transform:scaleX(0.845);transform-origin:0 0;-webkit-text-stroke:0.06px #141414;">Tools</div>
<div class="a" style="left:208px;top:357.188px;width:97px;height:0.8px;background:#c9c9c9;"></div>
<div class="a" style="left:208px;top:357.988px;width:97px;height:0.7px;background:#ffffff;"></div>
<svg class="a" style="left:208.5px;top:361.785px;" width="6" height="6" viewBox="0 0 6 6"><path d="M0.6 2.8 L2.1 4.6 L5 0.6" stroke="#141414" stroke-width="1.1" fill="none"/></svg>
<div class="t" style="left:216.3px;top:362.13px;font-size:6.8px;color:#141414;font-weight:normal;transform:scaleX(0.845);transform-origin:0 0;-webkit-text-stroke:0.06px #141414;">1 Capture.JPG</div>
<div class="a" style="left:665.3px;top:160.2px;width:109.5px;height:160.8px;background:#535353;border:1px solid #303030;box-shadow:0 0 1px rgba(0,0,0,.5)"></div>
<div class="a" style="left:666.3px;top:161.2px;width:107.5px;height:7.6px;background:#424242;"></div>
<div class="a" style="left:666.3px;top:161.2px;width:28.7px;height:7.6px;background:#535353;"></div>
<div class="a" style="left:725.5px;top:161.5px;width:0.8px;height:7.3px;background:#383838;"></div>
<div class="t" style="left:668.8px;top:162.24px;font-size:5.5px;color:#eeeeee;font-weight:normal;transform:scaleX(0.92);transform-origin:0 0;">Character</div>
<div class="t" style="left:698px;top:162.24px;font-size:5.5px;color:#a5a5a5;font-weight:normal;transform:scaleX(0.92);transform-origin:0 0;">Paragraph</div>
<svg class="a" style="left:753px;top:163px;" width="6" height="4" viewBox="0 0 6 4"><path d="M0.3 0.2 L1.8 1.7 L0.3 3.2Z M2.8 0.2 L4.3 1.7 L2.8 3.2Z" fill="#ddd"/></svg>
<svg class="a" style="left:764px;top:162.6px;" width="9" height="5" viewBox="0 0 9 5"><path d="M0.3 1.5 L2.8 1.5 L1.55 3Z" fill="#ccc"/><rect x="4" y="0.5" width="4.5" height="4" fill="#777"/></svg>
<div class="a" style="left:669.8px;top:171.7px;width:60.2px;height:9.4px;background:#2f2f2f;border:0.8px solid #5a74a8"></div>
<div class="t" style="left:672.60px;top:173.86px;font-size:5.6px;color:#f0f0f0;font-weight:bold;transform:scaleX(0.8163);transform-origin:0 0;">B Yekan Regular</div>
<div class="a" style="left:720.5px;top:172.5px;width:8.7px;height:7.8px;background:#606060;"></div>
<div class="a" style="left:724px;top:176px;width:1.8px;height:1.2px;background:#eee;"></div>
<div class="a" style="left:735px;top:171.8px;width:37.8px;height:9.3px;background:#4c4c4c;"></div>
<div class="t" style="left:738px;top:173.94px;font-size:5.5px;color:#737373;font-weight:normal;transform:scaleX(0.92);transform-origin:0 0;">Regular</div>
<div class="a" style="left:764.3px;top:172.6px;width:7.7px;height:7.7px;background:#565656;"></div>
<div class="a" style="left:767.4px;top:176.2px;width:1.6px;height:1px;background:#8a8a8a;"></div>
<div class="a" style="left:666.3px;top:184px;width:107.5px;height:0.8px;background:#474747;"></div>
<div class="t" style="left:669.5px;top:187px;font-family:'Liberation Serif',serif;font-size:9px;color:#d4d4d4;letter-spacing:-1.8px">tT</div>
<div class="a" style="left:679.4px;top:187.2px;width:38.60000000000002px;height:8.600000000000023px;background:#313131;"></div>
<div class="t" style="left:681.4px;top:189.11px;font-size:5.3px;color:#ececec;font-weight:normal;transform:scaleX(0.93);transform-origin:0 0;">150 pt</div>
<div class="a" style="left:710.2px;top:187.6px;width:7.8px;height:7.800000000000023px;background:#5e5e5e;"></div>
<div class="a" style="left:713.4px;top:191.2px;width:1.6px;height:1.1px;background:#e0e0e0;"></div>
<svg class="a" style="left:722px;top:186px;" width="9" height="10" viewBox="0 0 9 10"><path d="M2.5 1 L5 4.5 L0 4.5Z M2.5 5.5 L5 9 L0 9Z" fill="none" stroke="#d4d4d4" stroke-width="0.8"/><path d="M6.5 2 L6.5 8" stroke="#d4d4d4" stroke-width="0.6"/></svg>
<div class="a" style="left:732.5px;top:187.2px;width:36.200000000000045px;height:8.600000000000023px;background:#313131;"></div>
<div class="t" style="left:734.5px;top:189.11px;font-size:5.3px;color:#ececec;font-weight:normal;transform:scaleX(0.93);transform-origin:0 0;">17.56 pt</div>
<div class="a" style="left:760.9000000000001px;top:187.6px;width:7.8px;height:7.800000000000023px;background:#5e5e5e;"></div>
<div class="a" style="left:764.1px;top:191.2px;width:1.6px;height:1.1px;background:#e0e0e0;"></div>
<div class="t" style="left:669.3px;top:199.6px;font-size:7.6px;color:#d4d4d4;letter-spacing:-1.5px">VA</div>
<div class="a" style="left:671px;top:207.3px;width:7px;height:0.6px;background:#d4d4d4;"></div>
<div class="a" style="left:679.4px;top:199px;width:38.60000000000002px;height:8.599999999999994px;background:#313131;"></div>
<div class="t" style="left:681.4px;top:200.91px;font-size:5.3px;color:#ececec;font-weight:normal;transform:scaleX(0.93);transform-origin:0 0;">Metrics</div>
<div class="a" style="left:710.2px;top:199.4px;width:7.8px;height:7.7999999999999945px;background:#5e5e5e;"></div>
<div class="a" style="left:713.4px;top:203.0px;width:1.6px;height:1.1px;background:#e0e0e0;"></div>
<div class="t" style="left:722px;top:199px;font-size:7.6px;color:#d4d4d4;letter-spacing:-1.2px;border-top:0.7px solid #d4d4d4;line-height:0.85">VA</div>
<div class="a" style="left:722px;top:207.3px;width:8px;height:0.6px;background:#d4d4d4;"></div>
<div class="a" style="left:732.5px;top:199px;width:36.200000000000045px;height:8.599999999999994px;background:#313131;"></div>
<div class="t" style="left:734.5px;top:200.91px;font-size:5.3px;color:#ececec;font-weight:normal;transform:scaleX(0.93);transform-origin:0 0;">-10</div>
<div class="a" style="left:760.9000000000001px;top:199.4px;width:7.8px;height:7.7999999999999945px;background:#5e5e5e;"></div>
<div class="a" style="left:764.1px;top:203.0px;width:1.6px;height:1.1px;background:#e0e0e0;"></div>
<div class="a" style="left:666.3px;top:210.5px;width:107.5px;height:0.8px;background:#474747;"></div>
<div class="t" style="left:671px;top:213.2px;font-family:'Liberation Serif',serif;font-size:9.5px;color:#d4d4d4">T</div>
<div class="a" style="left:669.6px;top:214px;width:0.7px;height:7.5px;background:#d4d4d4;"></div>
<div class="a" style="left:680px;top:213.4px;width:26.799999999999955px;height:8.599999999999994px;background:#313131;"></div>
<div class="t" style="left:682px;top:215.31px;font-size:5.3px;color:#ececec;font-weight:normal;transform:scaleX(0.93);transform-origin:0 0;">100%</div>
<div class="t" style="left:733px;top:211.8px;font-family:'Liberation Serif',serif;font-size:9.5px;color:#d4d4d4">T</div>
<div class="a" style="left:732px;top:221.2px;width:9px;height:0.6px;background:#d4d4d4;"></div>
<div class="a" style="left:742.3px;top:213.4px;width:26.700000000000045px;height:8.599999999999994px;background:#313131;"></div>
<div class="t" style="left:744.3px;top:215.31px;font-size:5.3px;color:#ececec;font-weight:normal;transform:scaleX(0.93);transform-origin:0 0;">100%</div>
<svg class="a" style="left:669.5px;top:224px;" width="10" height="10" viewBox="0 0 10 10"><path d="M0.5 8.5 L3.5 1 L6.5 8.5Z" fill="none" stroke="#d4d4d4" stroke-width="0.9"/><path d="M8 1.5 L8 4 M7 3 L8 4 L9 3 M8 9 L8 6.5 M7 7.5 L8 6.5 L9 7.5" stroke="#d4d4d4" stroke-width="0.6" fill="none"/></svg>
<div class="a" style="left:680px;top:224.5px;width:26.799999999999955px;height:8.5px;background:#313131;"></div>
<div class="t" style="left:682px;top:226.31px;font-size:5.3px;color:#ececec;font-weight:normal;transform:scaleX(0.93);transform-origin:0 0;">0 pt</div>
<div class="t" style="left:724.5px;top:226.54px;font-size:5.5px;color:#b5b5b5;font-weight:normal;transform:scaleX(0.92);transform-origin:0 0;">Color:</div>
<div class="a" style="left:742.3px;top:224.5px;width:26.7px;height:8.5px;background:#3f3f3f;"></div>
<div class="a" style="left:666.3px;top:235.5px;width:107.5px;height:0.8px;background:#474747;"></div>
<div class="t" style="left:675px;top:239.6px;width:9px;text-align:center;font-family:'Liberation Serif',serif;font-size:8px;color:#d8d8d8;font-weight:bold">T</div>
<div class="t" style="left:687px;top:239.6px;width:9px;text-align:center;font-family:'Liberation Serif',serif;font-size:8px;color:#d8d8d8;font-style:italic">T</div>
<div class="t" style="left:699.5px;top:239.6px;width:9px;text-align:center;font-family:'Liberation Serif',serif;font-size:8px;color:#d8d8d8;font-weight:bold;letter-spacing:-0.8px">TT</div>
<div class="t" style="left:711.5px;top:239.6px;width:9px;text-align:center;font-family:'Liberation Serif',serif;font-size:8px;color:#d8d8d8;font-weight:bold;letter-spacing:-0.6px">Tт</div>
<div class="t" style="left:723px;top:239.6px;width:9px;text-align:center;font-family:'Liberation Serif',serif;font-size:8px;color:#d8d8d8;font-weight:bold">T<sup style="font-size:3px">1</sup></div>
<div class="t" style="left:735px;top:239.6px;width:9px;text-align:center;font-family:'Liberation Serif',serif;font-size:8px;color:#d8d8d8;font-weight:bold">T<sub style="font-size:3px">1</sub></div>
<div class="t" style="left:746.5px;top:239.6px;width:9px;text-align:center;font-family:'Liberation Serif',serif;font-size:8px;color:#d8d8d8;font-weight:bold;text-decoration:underline">T</div>
<div class="t" style="left:758px;top:239.6px;width:9px;text-align:center;font-family:'Liberation Serif',serif;font-size:8px;color:#d8d8d8;font-weight:bold;text-decoration:line-through">T</div>
<div class="a" style="left:666.3px;top:251px;width:107.5px;height:0.8px;background:#474747;"></div>
<div class="a" style="left:674px;top:254.3px;width:10.8px;height:10.1px;background:#303030;"></div>
<div class="t" style="left:675.5px;top:255.5px;font-family:'Liberation Serif',serif;font-size:8.5px;color:#e0e0e0">fi</div>
<div class="t" style="left:686px;top:255.6px;width:10px;text-align:center;font-family:'Liberation Serif',serif;font-style:italic;font-size:8px;color:#909090">&#x0259;</div>
<div class="t" style="left:698.5px;top:255.6px;width:10px;text-align:center;font-family:'Liberation Serif',serif;font-style:italic;font-size:8px;color:#909090">&#x1D04;t</div>
<div class="t" style="left:710.5px;top:255.6px;width:10px;text-align:center;font-family:'Liberation Serif',serif;font-style:italic;font-size:8px;color:#909090">&#x1D2C;</div>
<div class="t" style="left:722px;top:255.6px;width:10px;text-align:center;font-family:'Liberation Serif',serif;font-style:italic;font-size:8px;color:#909090">aa</div>
<div class="t" style="left:734px;top:255.6px;width:10px;text-align:center;font-family:'Liberation Serif',serif;font-style:italic;font-size:8px;color:#909090">T</div>
<div class="t" style="left:745.5px;top:255.6px;width:10px;text-align:center;font-family:'Liberation Serif',serif;font-style:italic;font-size:8px;color:#909090">1<sup style="font-size:3px">st</sup></div>
<div class="t" style="left:757px;top:255.6px;width:10px;text-align:center;font-family:'Liberation Serif',serif;font-style:italic;font-size:8px;color:#909090">&#189;</div>
<div class="a" style="left:666.3px;top:266.5px;width:107.5px;height:0.8px;background:#474747;"></div>
<div class="a" style="left:671.9px;top:270.3px;width:53.4px;height:8.3px;background:linear-gradient(#626262,#525252);border:0.6px solid #3a3a3a;border-radius:1.2px"></div>
<div class="t" style="left:675px;top:272.01px;font-size:5.3px;color:#e4e4e4;font-weight:normal;transform:scaleX(0.93);transform-origin:0 0;">Multiple</div>
<svg class="a" style="left:720.3px;top:271.5px;" width="4" height="6" viewBox="0 0 4 6"><path d="M0.3 2.2 L1.8 0.5 L3.3 2.2Z M0.3 3.5 L1.8 5.2 L3.3 3.5Z" fill="#ddd"/></svg>
<div class="t" style="left:728.5px;top:270.3px;font-size:5px;color:#d4d4d4">a</div>
<div class="t" style="left:731.5px;top:272px;font-size:7px;color:#d4d4d4">a</div>
<div class="a" style="left:739px;top:270.3px;width:31px;height:8.3px;background:linear-gradient(#626262,#525252);border:0.6px solid #3a3a3a;border-radius:1.2px"></div>
<div class="t" style="left:742.5px;top:272.01px;font-size:5.3px;color:#e4e4e4;font-weight:normal;transform:scaleX(0.93);transform-origin:0 0;">Crisp</div>
<svg class="a" style="left:765px;top:271.5px;" width="4" height="6" viewBox="0 0 4 6"><path d="M0.3 2.2 L1.8 0.5 L3.3 2.2Z M0.3 3.5 L1.8 5.2 L3.3 3.5Z" fill="#ddd"/></svg>
<div class="a" style="left:666.3px;top:280.3px;width:107.5px;height:0.8px;background:#474747;"></div>
<svg class="a" style="left:671.5px;top:285px;" width="10" height="10" viewBox="0 0 10 10"><path d="M2 5.5 Q2.5 7.5 4 7 Q5 6.5 5 5.5 Q5.3 7.2 6.5 6.8 Q7.3 6.4 7.3 5.5 Q7.6 7.2 8.7 6.8 L9.2 5" stroke="#d4d4d4" stroke-width="0.8" fill="none"/><path d="M2 5.5 Q0.8 9.2 3.5 9.5 Q5.2 9.5 5.8 8.3" stroke="#d4d4d4" stroke-width="0.8" fill="none"/><circle cx="4" cy="1.8" r="0.6" fill="#d4d4d4"/><circle cx="6" cy="1.8" r="0.6" fill="#d4d4d4"/><circle cx="5" cy="3.3" r="0.6" fill="#d4d4d4"/></svg>
<svg class="a" style="left:722px;top:285px;" width="10" height="10" viewBox="0 0 10 10"><path d="M2 5.5 Q2.5 7.5 4 7 Q5 6.5 5 5.5 Q5.3 7.2 6.5 6.8 Q7.3 6.4 7.3 5.5 Q7.6 7.2 8.7 6.8 L9.2 5" stroke="#d4d4d4" stroke-width="0.8" fill="none"/><path d="M2 5.5 Q0.8 9.2 3.5 9.5 Q5.2 9.5 5.8 8.3" stroke="#d4d4d4" stroke-width="0.8" fill="none"/><circle cx="4" cy="1.8" r="0.6" fill="#d4d4d4"/><circle cx="6" cy="1.8" r="0.6" fill="#d4d4d4"/><circle cx="5" cy="3.3" r="0.6" fill="#d4d4d4"/></svg>
<div class="a" style="left:682px;top:286.2px;width:36px;height:8.900000000000034px;background:#313131;"></div>
<div class="t" style="left:684px;top:288.41px;font-size:5.3px;color:#ececec;font-weight:normal;transform:scaleX(0.93);transform-origin:0 0;">0</div>
<div class="a" style="left:710.2px;top:286.59999999999997px;width:7.8px;height:8.100000000000033px;background:#5e5e5e;"></div>
<div class="a" style="left:713.4px;top:290.34999999999997px;width:1.6px;height:1.1px;background:#e0e0e0;"></div>
<div class="a" style="left:733px;top:286.2px;width:36px;height:8.900000000000034px;background:#313131;"></div>
<div class="t" style="left:735px;top:288.41px;font-size:5.3px;color:#ececec;font-weight:normal;transform:scaleX(0.93);transform-origin:0 0;">5</div>
<div class="a" style="left:761.2px;top:286.59999999999997px;width:7.8px;height:8.100000000000033px;background:#5e5e5e;"></div>
<div class="a" style="left:764.4px;top:290.34999999999997px;width:1.6px;height:1.1px;background:#e0e0e0;"></div>
<div class="t" style="left:672px;top:302.23px;font-size:5.4px;color:#d8d8d8;font-weight:normal;transform:scaleX(0.93);transform-origin:0 0;">Digits:</div>
<div class="a" style="left:690.8px;top:300.8px;width:40.2px;height:7.7px;background:linear-gradient(#626262,#525252);border:0.6px solid #3a3a3a;border-radius:1.2px"></div>
<div class="t" style="left:694px;top:302.20px;font-size:5.2px;color:#e4e4e4;font-weight:normal;transform:scaleX(0.93);transform-origin:0 0;">Arabic (012...</div>
<svg class="a" style="left:726.3px;top:301.8px;" width="4" height="6" viewBox="0 0 4 6"><path d="M0.3 2.2 L1.8 0.5 L3.3 2.2Z M0.3 3.5 L1.8 5.2 L3.3 3.5Z" fill="#ddd"/></svg>
<div class="a" style="left:672.3px;top:311.5px;width:6px;height:5.5px;background:#4e4e4e;border:0.6px solid #444;border-radius:1px"></div>
<div class="t" style="left:682px;top:312.10px;font-size:5.2px;color:#8a8a8a;font-weight:normal;transform:scaleX(0.93);transform-origin:0 0;">Justification Alternates</div>
<svg class="a" style="left:0;top:0" width="950" height="575" viewBox="0 0 950 575">
<defs><filter id="sh" x="-30%" y="-30%" width="160%" height="160%"><feGaussianBlur in="SourceAlpha" stdDeviation="1.2"/><feOffset dx="0.5" dy="1" result="b"/><feComponentTransfer><feFuncA type="linear" slope="0.6"/></feComponentTransfer><feMerge><feMergeNode/><feMergeNode in="SourceGraphic"/></feMerge></filter></defs>
<g fill="#f44646" filter="url(#sh)">
<path d="M327.3 83.1 L353.1 83.1 Q357.1 83.1 357.1 87.1 L357.1 111.6 Q357.1 115.6 353.1 115.6 L326.5 115.6 L309 119.6 L323.3 104.5 L323.3 87.1 Q323.3 83.1 327.3 83.1Z"/>
<path d="M732 118 L762 118 Q766 118 766 122 L766 145.3 L783.3 170.9 L756.5 155.7 L732 155.7 Q728 155.7 728 151.7 L728 122 Q728 118 732 118Z"/>
</g>
<path d="M339.8 92.6 L341.8 92.6 L341.8 105.7 L339.8 105.7 L339.8 95.8 Q338.2 97.2 336 97.9 L336 96 Q338.6 95 339.8 92.6Z" fill="#ffffff"/>
<text x="746.8" y="143" font-family="Liberation Sans" font-size="18" fill="#ffffff" text-anchor="middle">2</text>
</svg>
</body></html>
